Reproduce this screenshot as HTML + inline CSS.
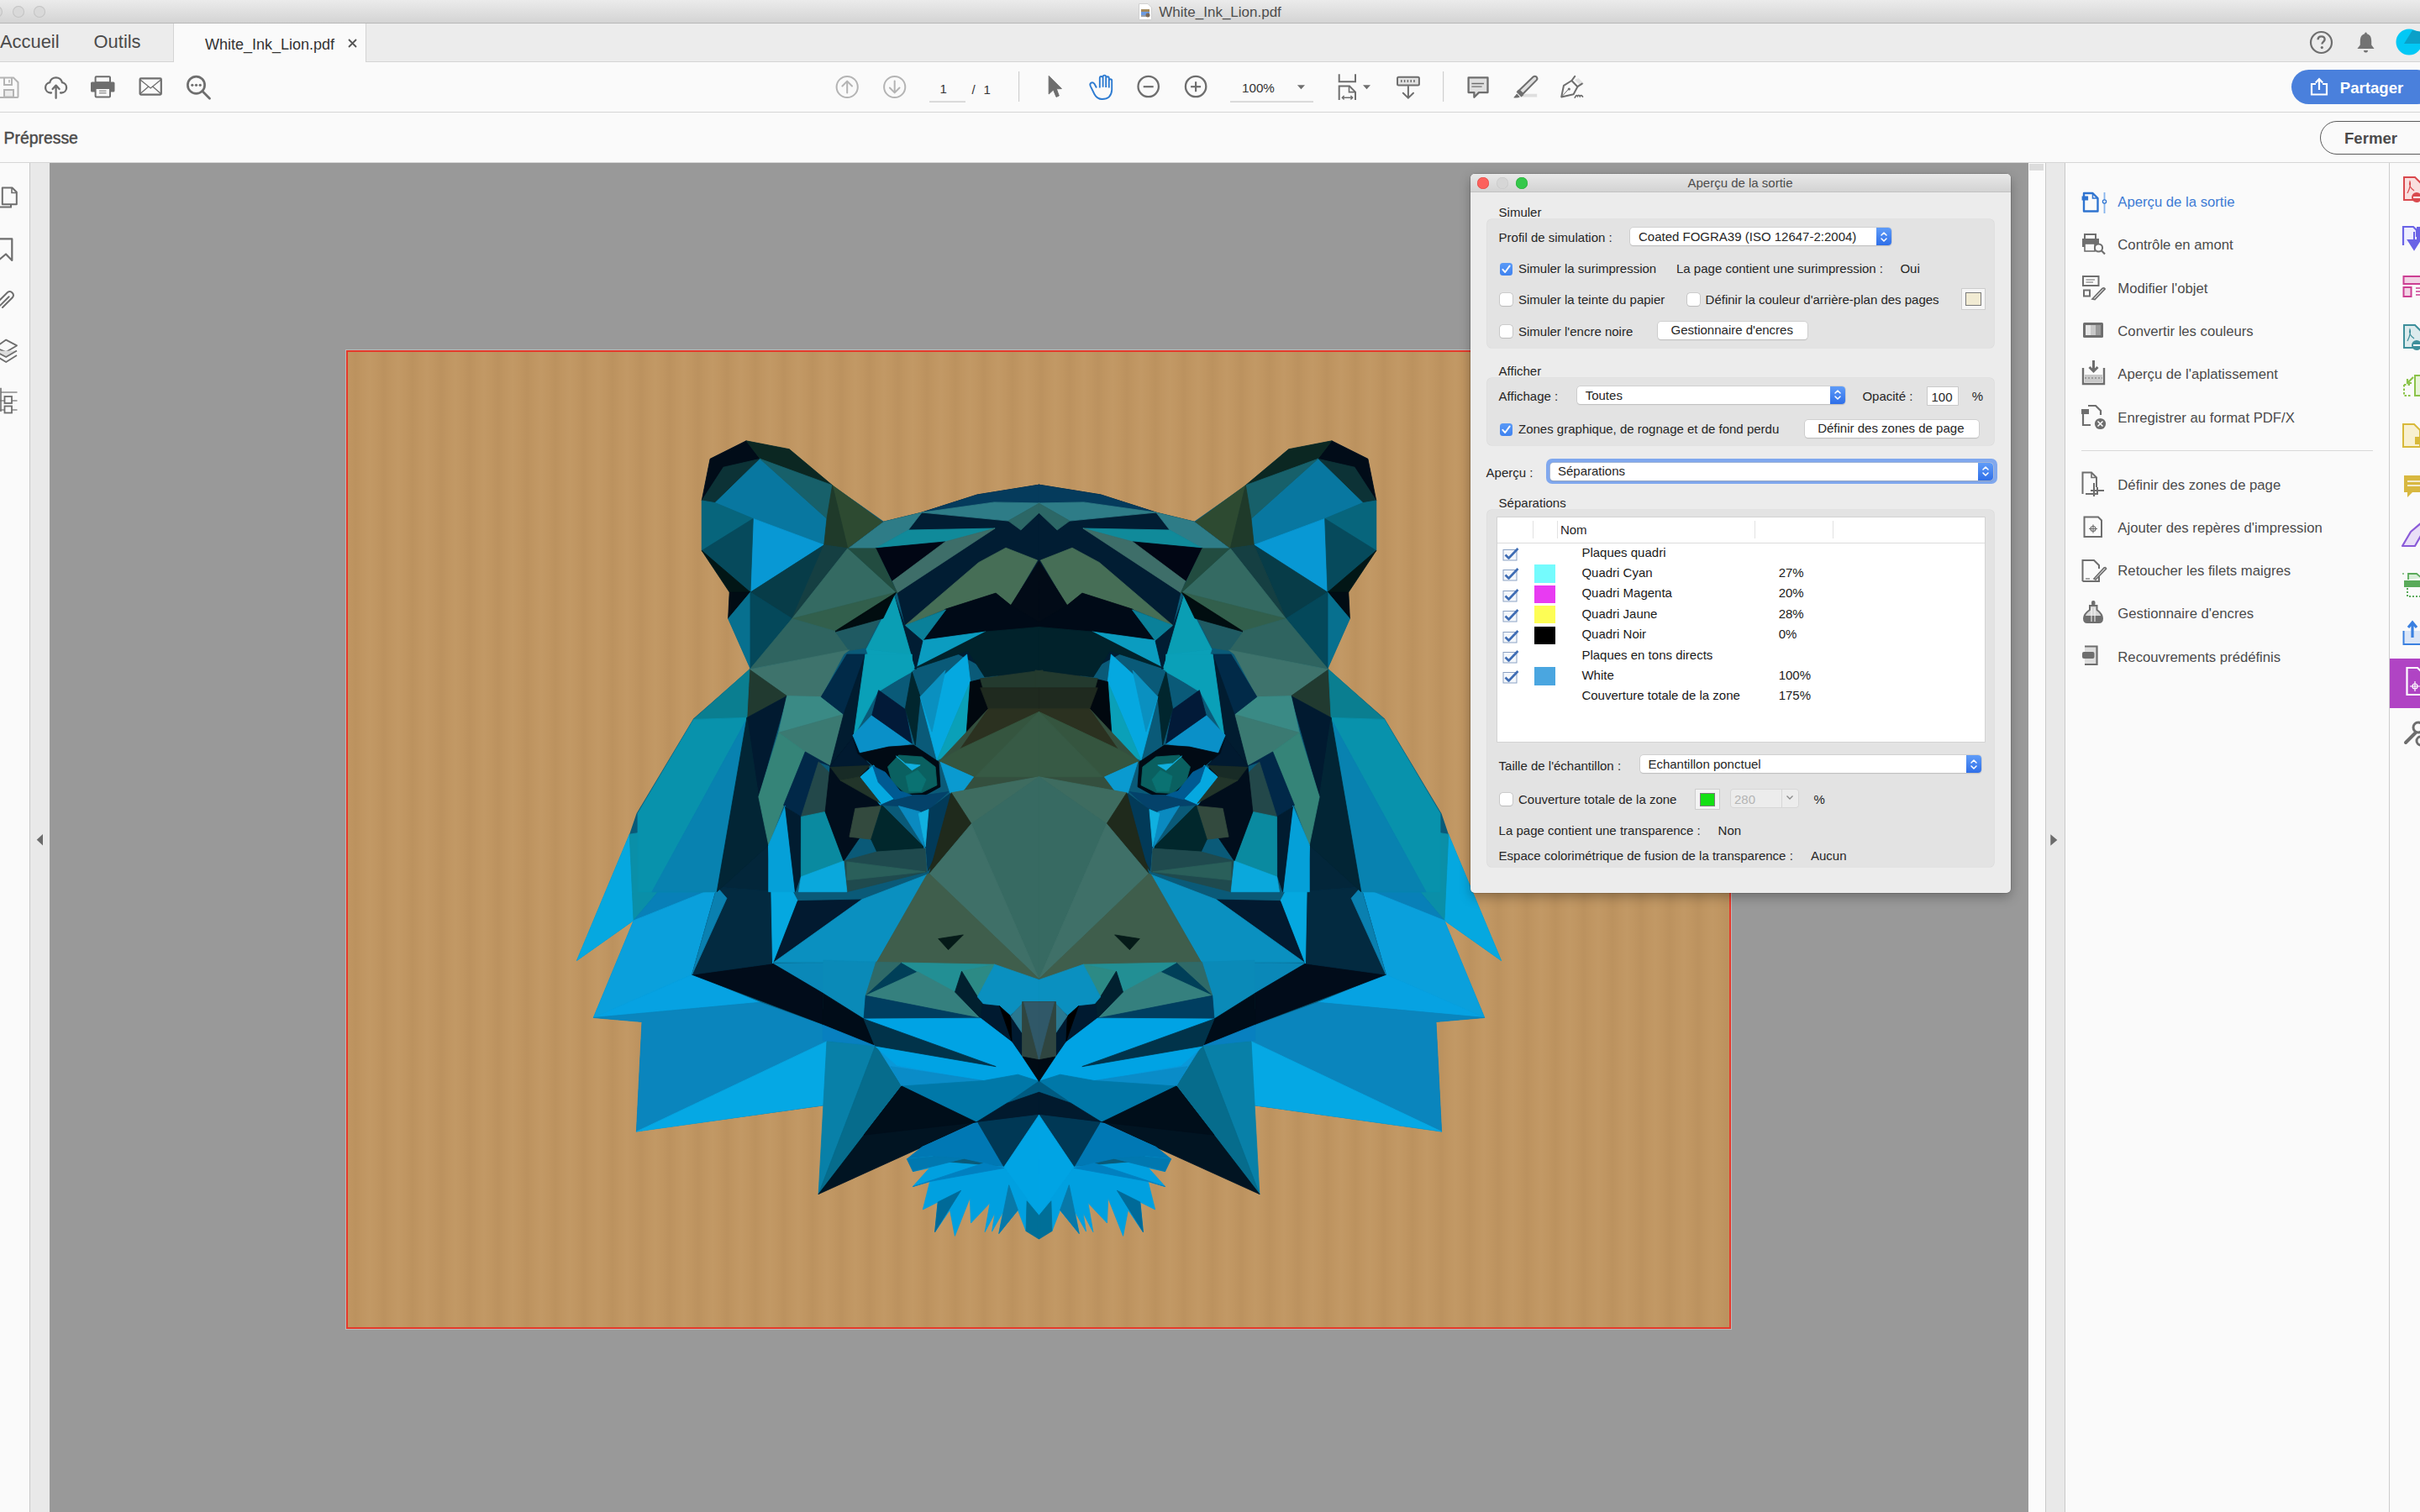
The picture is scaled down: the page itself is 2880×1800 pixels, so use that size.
<!DOCTYPE html>
<html><head><meta charset="utf-8"><style>
html,body{margin:0;padding:0;width:2880px;height:1800px;overflow:hidden;background:#fafafa;}
.r{position:absolute;}
.t{position:absolute;white-space:nowrap;line-height:1;font-family:"Liberation Sans",sans-serif;}
</style></head><body>
<div class="r" style="left:0px;top:0px;width:2880px;height:27px;background:linear-gradient(#ebebeb,#d4d4d4);"></div>
<div class="r" style="left:0px;top:27px;width:2880px;height:1px;background:#b8b8b8;"></div>
<div class="r" style="left:-11px;top:7px;width:14px;height:14px;border-radius:50%;background:#d9d9d9;box-shadow:inset 0 0 0 1px #c4c4c4;"></div>
<div class="r" style="left:14.7px;top:7px;width:14px;height:14px;border-radius:50%;background:#d9d9d9;box-shadow:inset 0 0 0 1px #c4c4c4;"></div>
<div class="r" style="left:40px;top:7px;width:14px;height:14px;border-radius:50%;background:#d9d9d9;box-shadow:inset 0 0 0 1px #c4c4c4;"></div>
<svg class="r" style="left:1355px;top:4px" width="16" height="20" viewBox="0 0 16 20">
<path d="M0.5 0.5 H11 L15.5 5 V19.5 H0.5 Z" fill="#fff" stroke="#d0d0d0"/>
<rect x="3" y="7" width="10" height="3" fill="#a58a5c"/><rect x="3" y="10" width="10" height="4" fill="#6d9be0"/><rect x="3" y="14" width="10" height="2" fill="#9aa0a8"/><circle cx="11" cy="14" r="2.5" fill="#7a6a5a"/>
</svg>
<div class="t" style="left:1379.30px;top:6.01px;font-size:17px;color:#4d4d4d;font-weight:normal;">White_Ink_Lion.pdf</div>
<div class="r" style="left:0px;top:28px;width:2880px;height:46px;background:#ececec;"></div>
<div class="r" style="left:0px;top:73px;width:2880px;height:1px;background:#d4d4d4;"></div>
<div class="r" style="left:206px;top:28px;width:230px;height:46px;background:#fafafa;border-left:1px solid #d4d4d4;border-right:1px solid #d4d4d4;box-sizing:border-box;"></div>
<div class="t" style="left:0.00px;top:39.46px;font-size:21.9px;color:#4b4b4b;font-weight:normal;">Accueil</div>
<div class="t" style="left:111.60px;top:39.46px;font-size:21.9px;color:#4b4b4b;font-weight:normal;">Outils</div>
<div class="t" style="left:244.00px;top:44.16px;font-size:18px;color:#333;font-weight:normal;">White_Ink_Lion.pdf</div>
<svg class="r" style="left:414px;top:46px" width="11" height="11" viewBox="0 0 11 11"><path d="M1 1 L10 10 M10 1 L1 10" stroke="#555" stroke-width="1.8"/></svg>
<svg class="r" style="left:2748px;top:36px" width="29" height="29" viewBox="0 0 29 29"><circle cx="14.5" cy="14.5" r="12.5" fill="none" stroke="#6e6e6e" stroke-width="2.2"/>
<path d="M10.6 11.2 C10.6 8.6 12.4 7.4 14.6 7.4 C17 7.4 18.6 8.8 18.6 11 C18.6 13.6 15.4 13.8 15.4 16.6" fill="none" stroke="#6e6e6e" stroke-width="2.4"/><circle cx="15.3" cy="20.6" r="1.6" fill="#6e6e6e"/></svg>
<svg class="r" style="left:2804px;top:37px" width="23" height="27" viewBox="0 0 23 27"><path d="M11.5 1.5 C12.6 1.5 12.8 2.5 12.8 3.2 C16.8 4.2 18.2 7.4 18.2 12 L18.2 16.5 L21.6 21 L1.4 21 L4.8 16.5 L4.8 12 C4.8 7.4 6.2 4.2 10.2 3.2 C10.2 2.5 10.4 1.5 11.5 1.5 Z" fill="#737373"/><path d="M9 23 H14 C14 25 12.8 25.6 11.5 25.6 C10.2 25.6 9 25 9 23Z" fill="#737373"/></svg>
<svg class="r" style="left:2851px;top:34px" width="32" height="32" viewBox="0 0 32 32"><circle cx="16" cy="16" r="15.5" fill="#02c8f5"/><path d="M10 18 L20 2 L32 4 L32 18 Z" fill="#0aa0c8"/></svg>
<div class="r" style="left:0px;top:74px;width:2880px;height:59px;background:#fafafa;"></div>
<div class="r" style="left:0px;top:133px;width:2880px;height:1px;background:#d6d6d6;"></div>
<div class="r" style="left:0px;top:134px;width:2880px;height:59px;background:#fafafa;"></div>
<div class="r" style="left:0px;top:193px;width:2880px;height:1px;background:#d6d6d6;"></div>
<div class="t" style="left:4.50px;top:155.28px;font-size:19.4px;color:#4b4b4b;font-weight:normal;-webkit-text-stroke:0.45px #4b4b4b;">Prépresse</div>
<div class="r" style="left:2727px;top:83px;width:170px;height:41px;border-radius:20.5px;background:#4a80dc;"></div>
<svg class="r" style="left:2749px;top:92px" width="22" height="22" viewBox="0 0 22 22"><path d="M7 8 H2 V20.5 H20 V8 H15" fill="none" stroke="#fff" stroke-width="2.2"/><path d="M11 15 V2.5 M6.8 6.5 L11 2 L15.2 6.5" fill="none" stroke="#fff" stroke-width="2.2"/></svg>
<div class="t" style="left:2784.80px;top:96.26px;font-size:18.6px;color:#fff;font-weight:bold;">Partager</div>
<div class="r" style="left:2761px;top:144px;width:140px;height:40px;border-radius:20px;border:1.6px solid #5a5a5a;box-sizing:border-box;"></div>
<div class="t" style="left:2790.00px;top:155.76px;font-size:18.6px;color:#4b4b4b;font-weight:bold;">Fermer</div>
<svg class="r" style="left:0;top:0" width="2880" height="194" viewBox="0 0 2880 194">
<path d="M-2 92.5 H16 L21.5 98 V115 Q21.5 116 20.5 116 H-2 Z" fill="none" stroke="#b4b4b4" stroke-width="2"/><path d="M5 92.5 V101 H14 V92.5" fill="none" stroke="#b4b4b4" stroke-width="2"/><rect x="5" y="107" width="11" height="8.5" fill="#ececec" stroke="#b4b4b4" stroke-width="2"/><rect x="10.2" y="95" width="1.6" height="3.5" fill="#b4b4b4"/>
<path d="M61 110.5 H60 A6.2 6.2 0 0 1 59.2 98.2 A7.6 7.6 0 0 1 74 98.2 A6.2 6.2 0 0 1 73.2 110.5 H72" fill="none" stroke="#6e6e6e" stroke-width="2.3" stroke-linecap="round"/><path d="M66.6 116.8 V102 M62.6 106 L66.6 101.6 L70.6 106" fill="none" stroke="#6e6e6e" stroke-width="2.3" stroke-linecap="round" stroke-linejoin="round"/>
<rect x="113.6" y="91.2" width="17.4" height="7" rx="1" fill="none" stroke="#6e6e6e" stroke-width="2"/><rect x="108" y="97.5" width="28.5" height="12" rx="1.5" fill="#6e6e6e"/><rect x="113.6" y="105" width="17.4" height="10.6" rx="1" fill="#fafafa" stroke="#6e6e6e" stroke-width="2"/><path d="M118 108.2 H126.5 M118 110.8 H126.5" stroke="#6e6e6e" stroke-width="1"/>
<rect x="166.6" y="93.4" width="25.2" height="19.2" rx="1" fill="none" stroke="#6e6e6e" stroke-width="2.2"/><path d="M167 95 L179.2 105 L191.4 95 M167 111.5 L176.5 103.2 M191.4 111.5 L182 103.2" fill="none" stroke="#6e6e6e" stroke-width="1.3"/>
<circle cx="233.5" cy="101.2" r="10.1" fill="none" stroke="#6e6e6e" stroke-width="2.7"/><path d="M240.8 108.6 L249.5 117.3" stroke="#6e6e6e" stroke-width="2.8" stroke-linecap="round"/><circle cx="228.8" cy="101.3" r="1.6" fill="#6e6e6e"/><circle cx="233.5" cy="101.3" r="1.6" fill="#6e6e6e"/><circle cx="238.2" cy="101.3" r="1.6" fill="#6e6e6e"/>
<circle cx="1008.2" cy="103.5" r="12.6" fill="none" stroke="#b4b4b4" stroke-width="2"/><path d="M1008.2 110.6 V97 M1002.4000000000001 102.5 L1008.2 96.6 L1014.0 102.5" fill="none" stroke="#b4b4b4" stroke-width="2" stroke-linecap="round" stroke-linejoin="round"/><circle cx="1064.7" cy="103.5" r="12.6" fill="none" stroke="#b4b4b4" stroke-width="2"/><path d="M1064.7 96.6 V110 M1058.9 104.5 L1064.7 110.4 L1070.5 104.5" fill="none" stroke="#b4b4b4" stroke-width="2" stroke-linecap="round" stroke-linejoin="round"/>
<rect x="1106" y="120.3" width="43" height="1.6" fill="#d2d2d2"/><rect x="1212" y="85" width="1.2" height="36" fill="#cfcfcf"/><rect x="1717" y="85" width="1.2" height="36" fill="#cfcfcf"/><rect x="1464" y="120.3" width="99" height="1.6" fill="#d2d2d2"/>
<path d="M1248.2 90.4 L1248.2 112 L1253.6 107 L1257 115.4 L1260.3 114 L1257.3 105.8 L1263.4 105.6 Z" fill="#6e6e6e" stroke="#6e6e6e" stroke-width="1" stroke-linejoin="round"/>
<path d="M1305 104.5 L1302.4 99.8 Q1300.5 97.2 1298 99 Q1296.7 100.2 1297.8 102.6 L1302.4 112 Q1305.5 118 1311.5 118 Q1322.5 118 1323.2 107 L1323.2 96 Q1323.2 94.2 1321.5 94.2 Q1319.8 94.2 1319.8 96 L1319.8 104.5 M1319.8 104.5 V93.2 Q1319.8 91.2 1318 91.2 Q1316.2 91.2 1316.2 93.2 V104 M1316.2 104 V91.6 Q1316.2 89.6 1314.4 89.6 Q1312.6 89.6 1312.6 91.6 V103.8 M1312.6 103.8 V93 Q1312.6 91 1310.6 91 Q1308.8 91 1308.8 93 V104.5" fill="none" stroke="#2d7bd1" stroke-width="1.9" stroke-linejoin="round"/>
<circle cx="1366.7" cy="103" r="12.2" fill="none" stroke="#6e6e6e" stroke-width="2.3"/><path d="M1360.7 103.2 H1372.7" stroke="#6e6e6e" stroke-width="2.2"/><circle cx="1423.1" cy="103" r="12.2" fill="none" stroke="#6e6e6e" stroke-width="2.3"/><path d="M1417.1 103.2 H1429.1" stroke="#6e6e6e" stroke-width="2.2"/><path d="M1423.1 97.2 V109.2" stroke="#6e6e6e" stroke-width="2.2"/>
<path d="M1543.9 101.2 H1553 L1548.45 106.3 Z" fill="#6e6e6e"/><path d="M1622 101.2 H1631 L1626.5 106.3 Z" fill="#6e6e6e"/>
<path d="M1593.7 88.3 V97.2 H1613 V88.3" fill="none" stroke="#6e6e6e" stroke-width="2"/><path d="M1593.7 119 V102.6 H1606 L1613 109.6 V119" fill="none" stroke="#6e6e6e" stroke-width="2"/><path d="M1605.5 102.6 V109.6 H1613" fill="none" stroke="#6e6e6e" stroke-width="1.6"/><path d="M1597.5 116.2 H1609.5 M1599.6 114 L1597.3 116.2 L1599.6 118.4 M1607.4 114 L1609.7 116.2 L1607.4 118.4" fill="none" stroke="#6e6e6e" stroke-width="1.4"/>
<rect x="1663" y="91.8" width="25.9" height="9.6" rx="1.5" fill="#e2e2e2" stroke="#6e6e6e" stroke-width="2"/><path d="M1667.8 95 V98 M1671.6 95 V98 M1675.4 95 V98 M1679.2 95 V98 M1683 95 V98" stroke="#6e6e6e" stroke-width="1.5"/><path d="M1675.9 103 V116.5 M1669.8 110.8 L1675.9 116.6 L1682 110.8" fill="none" stroke="#6e6e6e" stroke-width="2" stroke-linecap="round"/>
<path d="M1747.6 92.4 H1770.5 V110.1 H1760 L1754.4 115.8 V110.1 H1747.6 Z" fill="#e0e0e0" stroke="#6e6e6e" stroke-width="2.3" stroke-linejoin="round"/><path d="M1751.4 99.5 H1766 M1751.4 103.1 H1763.6" stroke="#6e6e6e" stroke-width="1.3"/>
<path d="M1809 115.5 H1829.2 V111.8 H1812.5 Z" fill="#dedede"/><path d="M1808 107.5 L1824.6 91.5 Q1826.6 89.8 1828.6 91.6 Q1830.3 93.6 1828.6 95.4 L1812.4 111.8 Z" fill="#dedede" stroke="#6e6e6e" stroke-width="2" stroke-linejoin="round"/><path d="M1806.8 106.8 L1813.4 113 L1810.4 115.4 L1804.6 109.4 Z" fill="#6e6e6e"/><path d="M1801.2 116.2 L1805.2 111.6 L1808.8 115.4 Q1806 116.8 1801.2 116.2Z" fill="#6e6e6e"/>
<path d="M1874 95 L1881 102 L1885 99.6 L1878.6 93 Z" fill="#e2e2e2"/><path d="M1858.2 115.4 L1861 101.8 L1870.4 96 L1877.4 103.2 L1872.6 112.3 Z" fill="none" stroke="#6e6e6e" stroke-width="2" stroke-linejoin="round"/><path d="M1870.4 96 L1874.2 90.8 M1877.4 103.2 L1882.8 99.6" stroke="#6e6e6e" stroke-width="2" stroke-linecap="round"/><path d="M1858.6 115 L1866.8 106" stroke="#6e6e6e" stroke-width="1"/><circle cx="1867.3" cy="106" r="1.6" fill="#6e6e6e"/><path d="M1874.2 116.2 Q1876 112 1877.4 114.6 Q1878.8 112 1880.2 114.8 Q1881.6 112.2 1883.6 115.2" fill="none" stroke="#6e6e6e" stroke-width="1.6" stroke-linecap="round"/>
</svg>
<div class="t" style="left:1118.50px;top:97.50px;font-size:15px;color:#333;font-weight:normal;">1</div>
<div class="t" style="left:1156.50px;top:98.60px;font-size:15px;color:#333;font-weight:normal;">/</div>
<div class="t" style="left:1170.50px;top:98.60px;font-size:15px;color:#333;font-weight:normal;">1</div>
<div class="t" style="left:1478.00px;top:97.33px;font-size:15.2px;color:#333;font-weight:normal;">100%</div>
<div class="r" style="left:0px;top:194px;width:35px;height:1606px;background:#fafafa;"></div>
<div class="r" style="left:35px;top:194px;width:1px;height:1606px;background:#c9c9c9;"></div>
<div class="r" style="left:36px;top:194px;width:23px;height:1606px;background:#e9e9e9;"></div>
<div class="r" style="left:58.5px;top:194px;width:1px;height:1606px;background:#d4d4d4;"></div>
<div class="r" style="left:59px;top:194px;width:2355px;height:1606px;background:#999999;"></div>
<div class="r" style="left:2414px;top:194px;width:19.5px;height:1606px;background:#fbfbfb;"></div>
<div class="r" style="left:2415px;top:195px;width:17px;height:8px;background:#dcdcdc;"></div>
<div class="r" style="left:2433.5px;top:194px;width:1px;height:1606px;background:#c9c9c9;"></div>
<div class="r" style="left:2434.5px;top:194px;width:22px;height:1606px;background:#e9e9e9;"></div>
<div class="r" style="left:2456.5px;top:194px;width:1px;height:1606px;background:#c9c9c9;"></div>
<div class="r" style="left:2457.5px;top:194px;width:385.5px;height:1606px;background:#fafafa;"></div>
<div class="r" style="left:2843px;top:194px;width:1px;height:1606px;background:#cdcdcd;"></div>
<div class="r" style="left:2844px;top:194px;width:36px;height:1606px;background:#fafafa;"></div>
<svg class="r" style="left:0;top:980px" width="2880" height="40" viewBox="0 980 2880 40"><path d="M51 993 L43.7 999.8 L51 1006.6 Z" fill="#6b6b6b"/><path d="M2440.3 993.2 L2448.3 999.9 L2440.3 1006.7 Z" fill="#6b6b6b"/></svg>
<svg class="r" style="left:0;top:194px" width="35" height="320" viewBox="0 194 35 320">
<path d="M-4 234 V246.5 H13 V243" fill="none" stroke="#6e6e6e" stroke-width="2"/><path d="M2.8 223.5 H14.5 L19.8 228.8 V243.2 H2.8 Z" fill="#fafafa" stroke="#6e6e6e" stroke-width="2" stroke-linejoin="round"/><path d="M14 223.5 V229.5 H19.8" fill="none" stroke="#6e6e6e" stroke-width="1.6"/>
<path d="M-2 284.4 H14.3 V310 L7 302.5 L-2 310" fill="none" stroke="#6e6e6e" stroke-width="2.2" stroke-linejoin="round"/>
<path d="M3 366 L15 354 A4.3 4.3 0 0 0 9 348 L-3 360 A2.3 2.3 0 0 0 0.4 363.4 L10.6 353.2" fill="none" stroke="#6e6e6e" stroke-width="2" stroke-linecap="round"/>
<path d="M-6 414 L7.2 404.6 L20 411.4 L7.2 419 Z" fill="#fafafa" stroke="#6e6e6e" stroke-width="1.8" stroke-linejoin="round"/><path d="M-6 418 L7.2 425 L20 417.4" fill="#ddd" stroke="#6e6e6e" stroke-width="1.8" stroke-linejoin="round"/><path d="M-6 423 L7.2 431 L20 423" fill="none" stroke="#6e6e6e" stroke-width="1.8" stroke-linejoin="round"/>
<path d="M1 467 H20.5 M-4 477 H20.5 M-4 488 H20.5" stroke="#8a8a8a" stroke-width="1.4"/><path d="M1 461.8 V490" stroke="#6e6e6e" stroke-width="1.6"/><rect x="5.5" y="472" width="8.5" height="8" fill="#fafafa" stroke="#6e6e6e" stroke-width="1.8"/><rect x="5.5" y="483.5" width="8.5" height="8" fill="#fafafa" stroke="#6e6e6e" stroke-width="1.8"/>
</svg>
<div class="r" style="left:411px;top:416px;width:1650px;height:1167px;background:#b9b9b9;"></div>
<div class="r" style="left:412px;top:417px;width:1648px;height:1165px;background:#e5392b;"></div>
<div class="r" style="left:414px;top:419px;width:1644px;height:1161px;background-color:#c09662;background-image:repeating-linear-gradient(90deg, rgba(90,55,20,0) 0px, rgba(90,55,20,0.045) 9px, rgba(90,55,20,0) 18px, rgba(255,235,200,0.03) 26px, rgba(90,55,20,0) 34px);"></div>
<svg class="r" style="left:0;top:0" width="2880" height="1800" viewBox="0 0 2880 1800">
<defs><clipPath id="pg"><rect x="414" y="419" width="1644" height="1161"/></clipPath></defs><g clip-path="url(#pg)" shape-rendering="geometricPrecision">
<polygon points="1237.0,577.0 1163.0,589.0 1097.0,610.0 1052.0,621.0 990.6,577.7 939.3,534.7 888.0,524.8 845.0,546.3 835.2,596.0 835.2,655.5 868.2,705.0 866.6,736.5 893.0,796.0 825.2,855.6 757.5,968.4 749.2,993.0 686.3,1143.7 754.1,1095.8 706.2,1211.5 764.0,1216.5 757.4,1347.2 984.0,1315.7 974.0,1421.6 1098.0,1365.3 1110.2,1376.8 1106.1,1390.5 1106.7,1406.5 1116.2,1431.0 1130.5,1440.5 1154.3,1426.2 1178.1,1432.1 1184.0,1444.0 1193.6,1442.9 1211.4,1440.5 1222.1,1429.8 1236.4,1475.0 1236.6,1475.0 1250.9,1429.8 1261.6,1440.5 1279.4,1442.9 1289.0,1444.0 1294.9,1432.1 1318.7,1426.2 1342.5,1440.5 1356.8,1431.0 1366.3,1406.5 1366.9,1390.5 1362.8,1376.8 1375.0,1365.3 1499.0,1421.6 1489.0,1315.7 1715.6,1347.2 1709.0,1216.5 1766.8,1211.5 1718.9,1095.8 1786.7,1143.7 1723.8,993.0 1715.5,968.4 1647.8,855.6 1580.0,796.0 1606.4,736.5 1604.8,705.0 1637.8,655.5 1637.8,596.0 1628.0,546.3 1585.0,524.8 1533.7,534.7 1482.4,577.7 1421.0,621.0 1376.0,610.0 1310.0,589.0 1236.0,577.0" fill="#0a5a78"/>
<polygon points="845.1,546.3 888.1,524.8 904.6,546.3 861.0,556.2 835.2,595.9" fill="#010c18" stroke="#010c18" stroke-width="0.8"/>
<polygon points="1627.9,546.3 1584.9,524.8 1568.4,546.3 1612.0,556.2 1637.8,595.9" fill="#010c18" stroke="#010c18" stroke-width="0.8"/>
<polygon points="888.1,524.8 939.3,534.7 990.6,577.7 904.6,546.3" fill="#0b2722" stroke="#0b2722" stroke-width="0.8"/>
<polygon points="1584.9,524.8 1533.7,534.7 1482.4,577.7 1568.4,546.3" fill="#0b2722" stroke="#0b2722" stroke-width="0.8"/>
<polygon points="861.0,556.2 904.6,546.3 851.0,598.6 835.2,595.9" fill="#0c3236" stroke="#0c3236" stroke-width="0.8"/>
<polygon points="1612.0,556.2 1568.4,546.3 1622.0,598.6 1637.8,595.9" fill="#0c3236" stroke="#0c3236" stroke-width="0.8"/>
<polygon points="851.0,598.6 904.6,546.3 984.0,617.4 980.7,648.8 896.3,617.4" fill="#0877a0" stroke="#0877a0" stroke-width="0.8"/>
<polygon points="1622.0,598.6 1568.4,546.3 1489.0,617.4 1492.3,648.8 1576.7,617.4" fill="#0877a0" stroke="#0877a0" stroke-width="0.8"/>
<polygon points="904.6,546.3 990.6,577.7 984.0,617.4" fill="#17606a" stroke="#17606a" stroke-width="0.8"/>
<polygon points="1568.4,546.3 1482.4,577.7 1489.0,617.4" fill="#17606a" stroke="#17606a" stroke-width="0.8"/>
<polygon points="835.2,595.9 851.0,598.6 896.3,617.4 835.2,655.5" fill="#07657c" stroke="#07657c" stroke-width="0.8"/>
<polygon points="1637.8,595.9 1622.0,598.6 1576.7,617.4 1637.8,655.5" fill="#07657c" stroke="#07657c" stroke-width="0.8"/>
<polygon points="896.3,617.4 980.7,648.8 893.0,705.1" fill="#0898d4" stroke="#0898d4" stroke-width="0.8"/>
<polygon points="1576.7,617.4 1492.3,648.8 1580.0,705.1" fill="#0898d4" stroke="#0898d4" stroke-width="0.8"/>
<polygon points="835.2,655.5 896.3,617.4 893.0,705.1" fill="#064a5c" stroke="#064a5c" stroke-width="0.8"/>
<polygon points="1637.8,655.5 1576.7,617.4 1580.0,705.1" fill="#064a5c" stroke="#064a5c" stroke-width="0.8"/>
<polygon points="835.2,655.5 893.0,705.1 868.2,705.1" fill="#021616" stroke="#021616" stroke-width="0.8"/>
<polygon points="1637.8,655.5 1580.0,705.1 1604.8,705.1" fill="#021616" stroke="#021616" stroke-width="0.8"/>
<polygon points="990.6,577.7 1051.8,622.4 1008.8,652.8" fill="#2d4a31" stroke="#2d4a31" stroke-width="0.8"/>
<polygon points="1482.4,577.7 1421.2,622.4 1464.2,652.8" fill="#2d4a31" stroke="#2d4a31" stroke-width="0.8"/>
<polygon points="990.6,577.7 1008.8,652.8 980.7,648.8 984.0,617.4" fill="#1f3a2a" stroke="#1f3a2a" stroke-width="0.8"/>
<polygon points="1482.4,577.7 1464.2,652.8 1492.3,648.8 1489.0,617.4" fill="#1f3a2a" stroke="#1f3a2a" stroke-width="0.8"/>
<polygon points="893.0,705.1 980.7,648.8 942.6,736.5" fill="#073c48" stroke="#073c48" stroke-width="0.8"/>
<polygon points="1580.0,705.1 1492.3,648.8 1530.4,736.5" fill="#073c48" stroke="#073c48" stroke-width="0.8"/>
<polygon points="980.7,648.8 1008.8,652.8 942.6,736.5" fill="#153f42" stroke="#153f42" stroke-width="0.8"/>
<polygon points="1492.3,648.8 1464.2,652.8 1530.4,736.5" fill="#153f42" stroke="#153f42" stroke-width="0.8"/>
<polygon points="868.2,705.1 893.0,705.1 866.6,736.5" fill="#010c14" stroke="#010c14" stroke-width="0.8"/>
<polygon points="1604.8,705.1 1580.0,705.1 1606.4,736.5" fill="#010c14" stroke="#010c14" stroke-width="0.8"/>
<polygon points="866.6,736.5 893.0,705.1 893.0,796.0" fill="#07708f" stroke="#07708f" stroke-width="0.8"/>
<polygon points="1606.4,736.5 1580.0,705.1 1580.0,796.0" fill="#07708f" stroke="#07708f" stroke-width="0.8"/>
<polygon points="893.0,705.1 942.6,736.5 893.0,796.0" fill="#04485a" stroke="#04485a" stroke-width="0.8"/>
<polygon points="1580.0,705.1 1530.4,736.5 1580.0,796.0" fill="#04485a" stroke="#04485a" stroke-width="0.8"/>
<polygon points="1008.8,652.8 1066.7,705.1 942.6,736.5" fill="#346a62" stroke="#346a62" stroke-width="0.8"/>
<polygon points="1464.2,652.8 1406.3,705.1 1530.4,736.5" fill="#346a62" stroke="#346a62" stroke-width="0.8"/>
<polygon points="942.6,736.5 1066.7,705.1 993.9,751.4" fill="#325f4c" stroke="#325f4c" stroke-width="0.8"/>
<polygon points="1530.4,736.5 1406.3,705.1 1479.1,751.4" fill="#325f4c" stroke="#325f4c" stroke-width="0.8"/>
<polygon points="993.9,751.4 1066.7,705.1 1048.5,734.8" fill="#020d0d" stroke="#020d0d" stroke-width="0.8"/>
<polygon points="1479.1,751.4 1406.3,705.1 1424.5,734.8" fill="#020d0d" stroke="#020d0d" stroke-width="0.8"/>
<polygon points="942.6,736.5 993.9,751.4 1010.5,774.5 893.0,796.0" fill="#2f6460" stroke="#2f6460" stroke-width="0.8"/>
<polygon points="1530.4,736.5 1479.1,751.4 1462.5,774.5 1580.0,796.0" fill="#2f6460" stroke="#2f6460" stroke-width="0.8"/>
<polygon points="993.9,751.4 1048.5,734.8 1030.3,771.2 1010.5,774.5" fill="#1f5a62" stroke="#1f5a62" stroke-width="0.8"/>
<polygon points="1479.1,751.4 1424.5,734.8 1442.7,771.2 1462.5,774.5" fill="#1f5a62" stroke="#1f5a62" stroke-width="0.8"/>
<polygon points="1051.8,621.1 1097.1,610.1 1162.9,589.0 1237.0,577.1 1237.0,830.8 1077.3,744.4 1068.0,705.4 1061.7,691.8 1041.9,652.8 1009.8,652.8" fill="#011d33" stroke="#011d33" stroke-width="0.8"/>
<polygon points="1421.2,621.1 1375.9,610.1 1310.1,589.0 1236.0,577.1 1236.0,830.8 1395.7,744.4 1405.0,705.4 1411.3,691.8 1431.1,652.8 1463.2,652.8" fill="#011d33" stroke="#011d33" stroke-width="0.8"/>
<polygon points="1097.1,610.1 1162.9,589.0 1237.0,577.1 1237.0,598.9 1183.1,597.9" fill="#053b5c" stroke="#053b5c" stroke-width="0.8"/>
<polygon points="1375.9,610.1 1310.1,589.0 1236.0,577.1 1236.0,598.9 1289.9,597.9" fill="#053b5c" stroke="#053b5c" stroke-width="0.8"/>
<polygon points="1051.8,621.1 1097.1,610.1 1080.9,631.0 1041.9,652.8 1009.8,652.8" fill="#2e7c87" stroke="#2e7c87" stroke-width="0.8"/>
<polygon points="1421.2,621.1 1375.9,610.1 1392.1,631.0 1431.1,652.8 1463.2,652.8" fill="#2e7c87" stroke="#2e7c87" stroke-width="0.8"/>
<polygon points="1097.1,610.1 1183.1,597.9 1237.0,598.9 1200.0,620.1" fill="#2e7c87" stroke="#2e7c87" stroke-width="0.8"/>
<polygon points="1375.9,610.1 1289.9,597.9 1236.0,598.9 1273.0,620.1" fill="#2e7c87" stroke="#2e7c87" stroke-width="0.8"/>
<polygon points="1200.0,620.1 1237.0,598.9 1237.0,610.1 1214.9,631.0" fill="#2c6766" stroke="#2c6766" stroke-width="0.8"/>
<polygon points="1273.0,620.1 1236.0,598.9 1236.0,610.1 1258.1,631.0" fill="#2c6766" stroke="#2c6766" stroke-width="0.8"/>
<polygon points="1041.9,652.8 1080.9,631.0 1184.1,629.0 1124.9,644.9" fill="#108a9a" stroke="#108a9a" stroke-width="0.8"/>
<polygon points="1431.1,652.8 1392.1,631.0 1288.9,629.0 1348.1,644.9" fill="#108a9a" stroke="#108a9a" stroke-width="0.8"/>
<polygon points="1041.9,652.8 1124.9,644.9 1062.1,691.8" fill="#010614" stroke="#010614" stroke-width="0.8"/>
<polygon points="1431.1,652.8 1348.1,644.9 1410.9,691.8" fill="#010614" stroke="#010614" stroke-width="0.8"/>
<polygon points="1124.9,644.9 1184.1,629.0 1068.0,705.4 1062.1,691.8" fill="#3e6e69" stroke="#3e6e69" stroke-width="0.8"/>
<polygon points="1348.1,644.9 1288.9,629.0 1405.0,705.4 1410.9,691.8" fill="#3e6e69" stroke="#3e6e69" stroke-width="0.8"/>
<polygon points="1077.3,744.4 1164.6,669.7 1197.0,652.2 1234.7,667.0 1203.0,720.6 1185.1,706.1 1124.9,725.3" fill="#466e56" stroke="#466e56" stroke-width="0.8"/>
<polygon points="1395.7,744.4 1308.4,669.7 1276.0,652.2 1238.3,667.0 1270.0,720.6 1287.9,706.1 1348.1,725.3" fill="#466e56" stroke="#466e56" stroke-width="0.8"/>
<polygon points="1236.4,668.4 1203.0,720.6 1237.0,741.1" fill="#020b17" stroke="#020b17" stroke-width="0.8"/>
<polygon points="1236.6,668.4 1270.0,720.6 1236.0,741.1" fill="#020b17" stroke="#020b17" stroke-width="0.8"/>
<polygon points="1124.9,725.3 1185.1,706.1 1203.0,720.6 1237.0,741.1 1237.0,746.4 1173.2,752.0 1098.4,762.3" fill="#000a17" stroke="#000a17" stroke-width="0.8"/>
<polygon points="1348.1,725.3 1287.9,706.1 1270.0,720.6 1236.0,741.1 1236.0,746.4 1299.8,752.0 1374.6,762.3" fill="#000a17" stroke="#000a17" stroke-width="0.8"/>
<polygon points="1075.9,745.1 1125.6,725.9 1098.4,762.3 1084.5,781.1" fill="#0a8099" stroke="#0a8099" stroke-width="0.8"/>
<polygon points="1397.1,745.1 1347.4,725.9 1374.6,762.3 1388.5,781.1" fill="#0a8099" stroke="#0a8099" stroke-width="0.8"/>
<polygon points="1084.5,782.5 1098.4,762.3 1173.2,752.0 1085.9,796.0" fill="#0b9cc0" stroke="#0b9cc0" stroke-width="0.8"/>
<polygon points="1388.5,782.5 1374.6,762.3 1299.8,752.0 1387.1,796.0" fill="#0b9cc0" stroke="#0b9cc0" stroke-width="0.8"/>
<polygon points="1085.9,796.7 1173.2,752.0 1237.0,746.4 1237.0,798.0 1171.9,806.0 1152.0,774.9" fill="#01222b" stroke="#01222b" stroke-width="0.8"/>
<polygon points="1387.1,796.7 1299.8,752.0 1236.0,746.4 1236.0,798.0 1301.1,806.0 1321.0,774.9" fill="#01222b" stroke="#01222b" stroke-width="0.8"/>
<polygon points="1064.0,709.0 1077.0,745.0 1098.0,763.0 1090.0,797.0 1084.0,779.0" fill="#011d33" stroke="#011d33" stroke-width="0.8"/>
<polygon points="1409.0,709.0 1396.0,745.0 1375.0,763.0 1383.0,797.0 1389.0,779.0" fill="#011d33" stroke="#011d33" stroke-width="0.8"/>
<polygon points="1064.0,709.0 1084.0,779.0 1031.0,773.0" fill="#0a9eb4" stroke="#0a9eb4" stroke-width="0.8"/>
<polygon points="1409.0,709.0 1389.0,779.0 1442.0,773.0" fill="#0a9eb4" stroke="#0a9eb4" stroke-width="0.8"/>
<polygon points="994.0,752.0 1064.0,709.0 1051.0,736.0" fill="#010d10" stroke="#010d10" stroke-width="0.8"/>
<polygon points="1479.0,752.0 1409.0,709.0 1422.0,736.0" fill="#010d10" stroke="#010d10" stroke-width="0.8"/>
<polygon points="1031.0,773.0 1084.0,779.0 1088.0,797.0 1046.0,823.0" fill="#0aa0b8" stroke="#0aa0b8" stroke-width="0.8"/>
<polygon points="1442.0,773.0 1389.0,779.0 1385.0,797.0 1427.0,823.0" fill="#0aa0b8" stroke="#0aa0b8" stroke-width="0.8"/>
<polygon points="1009.5,652.9 1042.2,652.9 1068.0,706.4" fill="#224c40" stroke="#224c40" stroke-width="0.8"/>
<polygon points="1463.5,652.9 1430.8,652.9 1405.0,706.4" fill="#224c40" stroke="#224c40" stroke-width="0.8"/>
<polygon points="919.5,1147.0 1043.5,1145.4 1030.3,1185.1 1028.7,1211.5" fill="#0a88b8" stroke="#0a88b8" stroke-width="0.8"/>
<polygon points="1553.5,1147.0 1429.5,1145.4 1442.7,1185.1 1444.3,1211.5" fill="#0a88b8" stroke="#0a88b8" stroke-width="0.8"/>
<polygon points="749.2,993.2 754.1,1095.8 686.3,1143.7" fill="#05a8e0" stroke="#05a8e0" stroke-width="0.8"/>
<polygon points="1723.8,993.2 1718.9,1095.8 1786.7,1143.7" fill="#05a8e0" stroke="#05a8e0" stroke-width="0.8"/>
<polygon points="749.2,993.2 855.0,976.7 754.1,1095.8" fill="#0a8fa8" stroke="#0a8fa8" stroke-width="0.8"/>
<polygon points="1723.8,993.2 1618.0,976.7 1718.9,1095.8" fill="#0a8fa8" stroke="#0a8fa8" stroke-width="0.8"/>
<polygon points="855.0,976.7 853.3,1056.1 754.1,1095.8" fill="#0880b8" stroke="#0880b8" stroke-width="0.8"/>
<polygon points="1618.0,976.7 1619.7,1056.1 1718.9,1095.8" fill="#0880b8" stroke="#0880b8" stroke-width="0.8"/>
<polygon points="706.2,1211.5 754.1,1095.8 853.3,1056.1 823.6,1160.3" fill="#0aa0dc" stroke="#0aa0dc" stroke-width="0.8"/>
<polygon points="1766.8,1211.5 1718.9,1095.8 1619.7,1056.1 1649.4,1160.3" fill="#0aa0dc" stroke="#0aa0dc" stroke-width="0.8"/>
<polygon points="706.2,1211.5 823.6,1160.3 904.6,1193.3" fill="#06a2e2" stroke="#06a2e2" stroke-width="0.8"/>
<polygon points="1766.8,1211.5 1649.4,1160.3 1568.4,1193.3" fill="#06a2e2" stroke="#06a2e2" stroke-width="0.8"/>
<polygon points="706.2,1211.5 904.6,1193.3 1041.9,1243.0 984.0,1239.7 757.4,1347.1 764.0,1216.5" fill="#0a85bd" stroke="#0a85bd" stroke-width="0.8"/>
<polygon points="1766.8,1211.5 1568.4,1193.3 1431.1,1243.0 1489.0,1239.7 1715.6,1347.1 1709.0,1216.5" fill="#0a85bd" stroke="#0a85bd" stroke-width="0.8"/>
<polygon points="757.4,1347.1 984.0,1239.7 980.7,1315.7" fill="#05a8e4" stroke="#05a8e4" stroke-width="0.8"/>
<polygon points="1715.6,1347.1 1489.0,1239.7 1492.3,1315.7" fill="#05a8e4" stroke="#05a8e4" stroke-width="0.8"/>
<polygon points="823.6,1160.3 919.5,1147.0 1028.6,1211.5 1041.9,1243.0" fill="#010c1a" stroke="#010c1a" stroke-width="0.8"/>
<polygon points="1649.4,1160.3 1553.5,1147.0 1444.4,1211.5 1431.1,1243.0" fill="#010c1a" stroke="#010c1a" stroke-width="0.8"/>
<polygon points="984.0,1239.7 1041.9,1244.6 974.1,1421.6" fill="#0880a8" stroke="#0880a8" stroke-width="0.8"/>
<polygon points="1489.0,1239.7 1431.1,1244.6 1498.9,1421.6" fill="#0880a8" stroke="#0880a8" stroke-width="0.8"/>
<polygon points="1041.9,1244.6 1073.3,1292.6 974.1,1421.6" fill="#066c8c" stroke="#066c8c" stroke-width="0.8"/>
<polygon points="1431.1,1244.6 1399.7,1292.6 1498.9,1421.6" fill="#066c8c" stroke="#066c8c" stroke-width="0.8"/>
<polygon points="1041.9,1243.0 1185.8,1269.4 1225.5,1277.7 1162.6,1335.6 1073.3,1292.6" fill="#0a98d8" stroke="#0a98d8" stroke-width="0.8"/>
<polygon points="1431.1,1243.0 1287.2,1269.4 1247.5,1277.7 1310.4,1335.6 1399.7,1292.6" fill="#0a98d8" stroke="#0a98d8" stroke-width="0.8"/>
<polygon points="1028.6,1211.5 1185.8,1267.8 1041.9,1243.0" fill="#032f48" stroke="#032f48" stroke-width="0.8"/>
<polygon points="1444.4,1211.5 1287.2,1267.8 1431.1,1243.0" fill="#032f48" stroke="#032f48" stroke-width="0.8"/>
<polygon points="1073.3,1292.6 1162.6,1335.6 1098.1,1365.3 974.1,1421.6" fill="#011422" stroke="#011422" stroke-width="0.8"/>
<polygon points="1399.7,1292.6 1310.4,1335.6 1374.9,1365.3 1498.9,1421.6" fill="#011422" stroke="#011422" stroke-width="0.8"/>
<polygon points="1162.6,1335.6 1195.7,1388.5 1098.1,1365.3" fill="#0a80c0" stroke="#0a80c0" stroke-width="0.8"/>
<polygon points="1310.4,1335.6 1277.3,1388.5 1374.9,1365.3" fill="#0a80c0" stroke="#0a80c0" stroke-width="0.8"/>
<polygon points="1162.6,1335.6 1236.4,1307.5 1236.4,1330.6 1195.7,1388.5" fill="#043652" stroke="#043652" stroke-width="0.8"/>
<polygon points="1310.4,1335.6 1236.6,1307.5 1236.6,1330.6 1277.3,1388.5" fill="#043652" stroke="#043652" stroke-width="0.8"/>
<polygon points="1195.7,1388.5 1236.4,1330.6 1236.4,1472.8" fill="#06a8e4" stroke="#06a8e4" stroke-width="0.8"/>
<polygon points="1277.3,1388.5 1236.6,1330.6 1236.6,1472.8" fill="#06a8e4" stroke="#06a8e4" stroke-width="0.8"/>
<polygon points="855.0,976.7 914.5,976.7 916.2,1061.0 853.3,1056.1" fill="#03263a" stroke="#03263a" stroke-width="0.8"/>
<polygon points="1618.0,976.7 1558.5,976.7 1556.8,1061.0 1619.7,1056.1" fill="#03263a" stroke="#03263a" stroke-width="0.8"/>
<polygon points="853.3,1056.1 917.8,1061.0 919.5,1147.0 823.6,1160.3" fill="#032a40" stroke="#032a40" stroke-width="0.8"/>
<polygon points="1619.7,1056.1 1555.2,1061.0 1553.5,1147.0 1649.4,1160.3" fill="#032a40" stroke="#032a40" stroke-width="0.8"/>
<polygon points="853.3,1056.1 864.9,1069.3 823.6,1160.3" fill="#0a80b0" stroke="#0a80b0" stroke-width="0.8"/>
<polygon points="1619.7,1056.1 1608.1,1069.3 1649.4,1160.3" fill="#0a80b0" stroke="#0a80b0" stroke-width="0.8"/>
<polygon points="914.5,1006.5 949.3,1072.6 919.5,1147.0 917.8,1061.0" fill="#05a8e0" stroke="#05a8e0" stroke-width="0.8"/>
<polygon points="1558.5,1006.5 1523.7,1072.6 1553.5,1147.0 1555.2,1061.0" fill="#05a8e0" stroke="#05a8e0" stroke-width="0.8"/>
<polygon points="949.3,1072.6 1025.3,1071.0 921.1,1145.4" fill="#021a30" stroke="#021a30" stroke-width="0.8"/>
<polygon points="1523.7,1072.6 1447.7,1071.0 1551.9,1145.4" fill="#021a30" stroke="#021a30" stroke-width="0.8"/>
<polygon points="921.1,1145.4 1025.3,1071.0 1103.1,1041.2 1043.5,1145.4" fill="#0a90c0" stroke="#0a90c0" stroke-width="0.8"/>
<polygon points="1551.9,1145.4 1447.7,1071.0 1369.9,1041.2 1429.5,1145.4" fill="#0a90c0" stroke="#0a90c0" stroke-width="0.8"/>
<polygon points="1043.5,1145.4 1103.1,1041.2 1236.4,976.7 1236.4,1165.2 1182.5,1148.7" fill="#3e5e4c" stroke="#3e5e4c" stroke-width="0.8"/>
<polygon points="1429.5,1145.4 1369.9,1041.2 1236.6,976.7 1236.6,1165.2 1290.5,1148.7" fill="#3e5e4c" stroke="#3e5e4c" stroke-width="0.8"/>
<polygon points="1156.0,1046.2 1236.4,976.7 1236.4,1165.2" fill="#437a6e" stroke="#437a6e" stroke-width="0.8"/>
<polygon points="1317.0,1046.2 1236.6,976.7 1236.6,1165.2" fill="#437a6e" stroke="#437a6e" stroke-width="0.8"/>
<polygon points="1116.3,1115.6 1146.1,1112.3 1127.9,1130.5" fill="#021816" stroke="#021816" stroke-width="0.8"/>
<polygon points="1356.7,1115.6 1326.9,1112.3 1345.1,1130.5" fill="#021816" stroke="#021816" stroke-width="0.8"/>
<polygon points="1030.3,1185.1 1073.3,1147.0 1182.5,1148.7 1165.9,1211.5" fill="#318080" stroke="#318080" stroke-width="0.8"/>
<polygon points="1442.7,1185.1 1399.7,1147.0 1290.5,1148.7 1307.1,1211.5" fill="#318080" stroke="#318080" stroke-width="0.8"/>
<polygon points="1028.6,1211.5 1165.9,1211.5 1162.6,1195.0 1030.3,1185.1" fill="#043d5a" stroke="#043d5a" stroke-width="0.8"/>
<polygon points="1444.4,1211.5 1307.1,1211.5 1310.4,1195.0 1442.7,1185.1" fill="#043d5a" stroke="#043d5a" stroke-width="0.8"/>
<polygon points="1136.1,1158.6 1169.2,1208.2 1202.3,1218.2 1236.4,1284.3 1236.4,1261.1 1215.5,1251.2 1202.3,1195.0" fill="#021a2a" stroke="#021a2a" stroke-width="0.8"/>
<polygon points="1336.9,1158.6 1303.8,1208.2 1270.7,1218.2 1236.6,1284.3 1236.6,1261.1 1257.5,1251.2 1270.7,1195.0" fill="#021a2a" stroke="#021a2a" stroke-width="0.8"/>
<polygon points="1215.5,1191.7 1236.4,1191.7 1236.4,1261.1 1217.2,1251.2" fill="#35606a" stroke="#35606a" stroke-width="0.8"/>
<polygon points="1257.5,1191.7 1236.6,1191.7 1236.6,1261.1 1255.8,1251.2" fill="#35606a" stroke="#35606a" stroke-width="0.8"/>
<polygon points="891.9,796.9 1010.5,773.9 1004.0,779.0 977.2,829.6 936.5,828.6" fill="#3e736c" stroke="#3e736c" stroke-width="0.8"/>
<polygon points="1581.1,796.9 1462.5,773.9 1469.0,779.0 1495.8,829.6 1536.5,828.6" fill="#3e736c" stroke="#3e736c" stroke-width="0.8"/>
<polygon points="891.9,796.9 936.5,828.6 888.9,854.4" fill="#213a30" stroke="#213a30" stroke-width="0.8"/>
<polygon points="1581.1,796.9 1536.5,828.6 1584.1,854.4" fill="#213a30" stroke="#213a30" stroke-width="0.8"/>
<polygon points="825.5,856.4 891.9,796.9 888.9,854.4" fill="#0a7e90" stroke="#0a7e90" stroke-width="0.8"/>
<polygon points="1647.5,856.4 1581.1,796.9 1584.1,854.4" fill="#0a7e90" stroke="#0a7e90" stroke-width="0.8"/>
<polygon points="759.0,968.4 825.5,856.4 888.9,854.4 853.2,1061.7 759.0,1061.7" fill="#0892ac" stroke="#0892ac" stroke-width="0.8"/>
<polygon points="1714.0,968.4 1647.5,856.4 1584.1,854.4 1619.8,1061.7 1714.0,1061.7" fill="#0892ac" stroke="#0892ac" stroke-width="0.8"/>
<polygon points="775.9,1061.7 886.9,859.3 853.2,1061.7" fill="#0882b0" stroke="#0882b0" stroke-width="0.8"/>
<polygon points="1697.1,1061.7 1586.1,859.3 1619.8,1061.7" fill="#0882b0" stroke="#0882b0" stroke-width="0.8"/>
<polygon points="888.9,854.4 936.5,828.6 902.8,948.6" fill="#011a30" stroke="#011a30" stroke-width="0.8"/>
<polygon points="1584.1,854.4 1536.5,828.6 1570.2,948.6" fill="#011a30" stroke="#011a30" stroke-width="0.8"/>
<polygon points="888.9,854.4 902.8,948.6 914.7,1006.1 853.2,1061.7" fill="#022535" stroke="#022535" stroke-width="0.8"/>
<polygon points="1584.1,854.4 1570.2,948.6 1558.3,1006.1 1619.8,1061.7" fill="#022535" stroke="#022535" stroke-width="0.8"/>
<polygon points="936.5,828.6 977.2,829.6 1004.0,850.4 926.6,872.2" fill="#3a8a85" stroke="#3a8a85" stroke-width="0.8"/>
<polygon points="1536.5,828.6 1495.8,829.6 1469.0,850.4 1546.4,872.2" fill="#3a8a85" stroke="#3a8a85" stroke-width="0.8"/>
<polygon points="926.6,872.2 1004.0,850.4 988.1,911.9 958.3,895.0" fill="#3b7a72" stroke="#3b7a72" stroke-width="0.8"/>
<polygon points="1546.4,872.2 1469.0,850.4 1484.9,911.9 1514.7,895.0" fill="#3b7a72" stroke="#3b7a72" stroke-width="0.8"/>
<polygon points="977.2,829.6 1007.9,779.0 1029.8,779.0 1004.0,850.4" fill="#012a48" stroke="#012a48" stroke-width="0.8"/>
<polygon points="1495.8,829.6 1465.1,779.0 1443.2,779.0 1469.0,850.4" fill="#012a48" stroke="#012a48" stroke-width="0.8"/>
<polygon points="1004.0,850.4 1029.8,779.0 1015.9,877.2 988.1,911.9" fill="#011c30" stroke="#011c30" stroke-width="0.8"/>
<polygon points="1469.0,850.4 1443.2,779.0 1457.1,877.2 1484.9,911.9" fill="#011c30" stroke="#011c30" stroke-width="0.8"/>
<polygon points="902.8,948.6 926.6,872.2 958.3,895.0 932.6,958.5 914.7,1006.1" fill="#358478" stroke="#358478" stroke-width="0.8"/>
<polygon points="1570.2,948.6 1546.4,872.2 1514.7,895.0 1540.4,958.5 1558.3,1006.1" fill="#358478" stroke="#358478" stroke-width="0.8"/>
<polygon points="932.6,958.5 958.3,895.0 988.1,911.9 974.2,906.9 953.4,972.4" fill="#012848" stroke="#012848" stroke-width="0.8"/>
<polygon points="1540.4,958.5 1514.7,895.0 1484.9,911.9 1498.8,906.9 1519.6,972.4" fill="#012848" stroke="#012848" stroke-width="0.8"/>
<polygon points="953.4,972.4 974.2,906.9 998.0,930.7 982.1,966.4" fill="#23484a" stroke="#23484a" stroke-width="0.8"/>
<polygon points="1519.6,972.4 1498.8,906.9 1475.0,930.7 1490.9,966.4" fill="#23484a" stroke="#23484a" stroke-width="0.8"/>
<polygon points="914.7,1006.1 934.5,959.5 946.4,1061.7 914.7,1061.7" fill="#05a0d8" stroke="#05a0d8" stroke-width="0.8"/>
<polygon points="1558.3,1006.1 1538.5,959.5 1526.6,1061.7 1558.3,1061.7" fill="#05a0d8" stroke="#05a0d8" stroke-width="0.8"/>
<polygon points="934.5,960.5 953.4,972.4 952.4,1043.8 946.4,1061.7" fill="#011c30" stroke="#011c30" stroke-width="0.8"/>
<polygon points="1538.5,960.5 1519.6,972.4 1520.6,1043.8 1526.6,1061.7" fill="#011c30" stroke="#011c30" stroke-width="0.8"/>
<polygon points="953.4,972.4 982.1,966.4 1004.0,1025.0 953.4,1043.8" fill="#0a8aa0" stroke="#0a8aa0" stroke-width="0.8"/>
<polygon points="1519.6,972.4 1490.9,966.4 1469.0,1025.0 1519.6,1043.8" fill="#0a8aa0" stroke="#0a8aa0" stroke-width="0.8"/>
<polygon points="982.1,966.4 988.1,911.9 1015.9,877.2 1027.8,897.0 1049.6,958.5 1004.0,1025.0" fill="#010e1c" stroke="#010e1c" stroke-width="0.8"/>
<polygon points="1490.9,966.4 1484.9,911.9 1457.1,877.2 1445.2,897.0 1423.4,958.5 1469.0,1025.0" fill="#010e1c" stroke="#010e1c" stroke-width="0.8"/>
<polygon points="1010.9,996.2 1017.8,962.5 1048.6,959.5 1036.7,999.2" fill="#334a3e" stroke="#334a3e" stroke-width="0.8"/>
<polygon points="1462.1,996.2 1455.2,962.5 1424.4,959.5 1436.3,999.2" fill="#334a3e" stroke="#334a3e" stroke-width="0.8"/>
<polygon points="1036.7,999.2 1049.6,958.5 1101.2,1010.1 1043.6,1014.0" fill="#01272c" stroke="#01272c" stroke-width="0.8"/>
<polygon points="1436.3,999.2 1423.4,958.5 1371.8,1010.1 1429.4,1014.0" fill="#01272c" stroke="#01272c" stroke-width="0.8"/>
<polygon points="1029.8,779.0 1085.3,779.0 1085.3,799.8 1045.6,821.7 1015.9,877.2" fill="#0aa0b8" stroke="#0aa0b8" stroke-width="0.8"/>
<polygon points="1443.2,779.0 1387.7,779.0 1387.7,799.8 1427.4,821.7 1457.1,877.2" fill="#0aa0b8" stroke="#0aa0b8" stroke-width="0.8"/>
<polygon points="1014.9,875.2 1037.7,851.4 1085.3,885.1 1059.5,891.1 1023.8,897.0" fill="#0a90c8" stroke="#0a90c8" stroke-width="0.8"/>
<polygon points="1458.1,875.2 1435.3,851.4 1387.7,885.1 1413.5,891.1 1449.2,897.0" fill="#0a90c8" stroke="#0a90c8" stroke-width="0.8"/>
<polygon points="1045.6,821.7 1077.4,844.5 1085.3,885.1 1037.7,851.4" fill="#021a38" stroke="#021a38" stroke-width="0.8"/>
<polygon points="1427.4,821.7 1395.6,844.5 1387.7,885.1 1435.3,851.4" fill="#021a38" stroke="#021a38" stroke-width="0.8"/>
<polygon points="1077.4,843.5 1085.3,799.8 1095.2,829.6 1089.3,887.1" fill="#01262e" stroke="#01262e" stroke-width="0.8"/>
<polygon points="1395.6,843.5 1387.7,799.8 1377.8,829.6 1383.7,887.1" fill="#01262e" stroke="#01262e" stroke-width="0.8"/>
<polygon points="1095.2,829.6 1150.7,779.0 1154.7,811.7 1115.0,905.0" fill="#05a8e0" stroke="#05a8e0" stroke-width="0.8"/>
<polygon points="1377.8,829.6 1322.3,779.0 1318.3,811.7 1358.0,905.0" fill="#05a8e0" stroke="#05a8e0" stroke-width="0.8"/>
<polygon points="1095.2,829.6 1125.0,797.9 1109.1,871.2" fill="#0a90c0" stroke="#0a90c0" stroke-width="0.8"/>
<polygon points="1377.8,829.6 1348.0,797.9 1363.9,871.2" fill="#0a90c0" stroke="#0a90c0" stroke-width="0.8"/>
<polygon points="1115.0,905.0 1154.7,811.7 1148.8,891.1" fill="#0aa0b8" stroke="#0aa0b8" stroke-width="0.8"/>
<polygon points="1358.0,905.0 1318.3,811.7 1324.2,891.1" fill="#0aa0b8" stroke="#0aa0b8" stroke-width="0.8"/>
<polygon points="1148.8,891.1 1154.7,811.7 1170.6,807.8 1176.5,843.5" fill="#01080f" stroke="#01080f" stroke-width="0.8"/>
<polygon points="1324.2,891.1 1318.3,811.7 1302.4,807.8 1296.5,843.5" fill="#01080f" stroke="#01080f" stroke-width="0.8"/>
<polygon points="1166.6,807.8 1241.0,797.9 1241.0,847.4 1176.5,843.5" fill="#233a2e" stroke="#233a2e" stroke-width="0.8"/>
<polygon points="1306.4,807.8 1232.0,797.9 1232.0,847.4 1296.5,843.5" fill="#233a2e" stroke="#233a2e" stroke-width="0.8"/>
<polygon points="1117.0,906.9 1176.5,843.5 1241.0,847.4 1241.0,924.8 1146.8,940.7" fill="#344f3e" stroke="#344f3e" stroke-width="0.8"/>
<polygon points="1356.0,906.9 1296.5,843.5 1232.0,847.4 1232.0,924.8 1326.2,940.7" fill="#344f3e" stroke="#344f3e" stroke-width="0.8"/>
<polygon points="1130.9,944.6 1241.0,924.8 1241.0,1061.7 1107.1,1061.7 1154.7,980.3" fill="#3c6a60" stroke="#3c6a60" stroke-width="0.8"/>
<polygon points="1342.1,944.6 1232.0,924.8 1232.0,1061.7 1365.9,1061.7 1318.3,980.3" fill="#3c6a60" stroke="#3c6a60" stroke-width="0.8"/>
<polygon points="1130.9,944.6 1154.7,980.3 1103.1,1037.8" fill="#1f2a1c" stroke="#1f2a1c" stroke-width="0.8"/>
<polygon points="1342.1,944.6 1318.3,980.3 1369.9,1037.8" fill="#1f2a1c" stroke="#1f2a1c" stroke-width="0.8"/>
<polygon points="1119.0,906.9 1158.7,924.8 1146.8,940.7 1130.9,944.6" fill="#0a9ad0" stroke="#0a9ad0" stroke-width="0.8"/>
<polygon points="1354.0,906.9 1314.3,924.8 1326.2,940.7 1342.1,944.6" fill="#0a9ad0" stroke="#0a9ad0" stroke-width="0.8"/>
<polygon points="1021.8,897.0 1057.5,889.1 1087.3,887.1 1117.0,906.9 1119.0,936.7 1101.2,946.6 1075.4,946.6 1053.6,932.7 1045.6,916.9" fill="#010a14" stroke="#010a14" stroke-width="0.8"/>
<polygon points="1451.2,897.0 1415.5,889.1 1385.7,887.1 1356.0,906.9 1354.0,936.7 1371.8,946.6 1397.6,946.6 1419.4,932.7 1427.4,916.9" fill="#010a14" stroke="#010a14" stroke-width="0.8"/>
<polygon points="1056.5,912.9 1069.4,899.0 1097.2,901.0 1113.1,912.9 1115.0,934.7 1097.2,943.6 1077.4,944.6 1061.5,930.7" fill="#0a6060" stroke="#0a6060" stroke-width="0.8"/>
<polygon points="1416.5,912.9 1403.6,899.0 1375.8,901.0 1359.9,912.9 1358.0,934.7 1375.8,943.6 1395.6,944.6 1411.5,930.7" fill="#0a6060" stroke="#0a6060" stroke-width="0.8"/>
<polygon points="1066.4,900.0 1077.4,908.9 1095.2,910.9 1085.3,916.9" fill="#10b0e0" stroke="#10b0e0" stroke-width="0.8"/>
<polygon points="1406.6,900.0 1395.6,908.9 1377.8,910.9 1387.7,916.9" fill="#10b0e0" stroke="#10b0e0" stroke-width="0.8"/>
<polygon points="1022.8,925.8 1039.7,910.9 1053.6,932.7 1075.4,946.6 1067.4,956.5 1047.6,958.5" fill="#05a8e0" stroke="#05a8e0" stroke-width="0.8"/>
<polygon points="1450.2,925.8 1433.3,910.9 1419.4,932.7 1397.6,946.6 1405.6,956.5 1425.4,958.5" fill="#05a8e0" stroke="#05a8e0" stroke-width="0.8"/>
<polygon points="1047.6,958.5 1075.4,946.6 1101.2,946.6 1128.9,942.6 1107.1,962.5 1095.2,966.4 1069.4,959.5" fill="#04426a" stroke="#04426a" stroke-width="0.8"/>
<polygon points="1425.4,958.5 1397.6,946.6 1371.8,946.6 1344.1,942.6 1365.9,962.5 1377.8,966.4 1403.6,959.5" fill="#04426a" stroke="#04426a" stroke-width="0.8"/>
<polygon points="1095.2,966.4 1107.1,962.5 1130.9,944.6 1130.9,982.3 1103.1,1037.8" fill="#023a58" stroke="#023a58" stroke-width="0.8"/>
<polygon points="1377.8,966.4 1365.9,962.5 1342.1,944.6 1342.1,982.3 1369.9,1037.8" fill="#023a58" stroke="#023a58" stroke-width="0.8"/>
<polygon points="1101.2,1010.1 1069.4,959.5 1095.2,966.4 1103.1,1037.8" fill="#0a8ac0" stroke="#0a8ac0" stroke-width="0.8"/>
<polygon points="1371.8,1010.1 1403.6,959.5 1377.8,966.4 1369.9,1037.8" fill="#0a8ac0" stroke="#0a8ac0" stroke-width="0.8"/>
<polygon points="1093.2,968.4 1105.1,963.5 1101.2,1008.1" fill="#10b0e0" stroke="#10b0e0" stroke-width="0.8"/>
<polygon points="1379.8,968.4 1367.9,963.5 1371.8,1008.1" fill="#10b0e0" stroke="#10b0e0" stroke-width="0.8"/>
<polygon points="1004.0,1025.0 1043.6,1014.0 1101.2,1010.1 1103.1,1037.8 1007.9,1061.7" fill="#1f4a4e" stroke="#1f4a4e" stroke-width="0.8"/>
<polygon points="1469.0,1025.0 1429.4,1014.0 1371.8,1010.1 1369.9,1037.8 1465.1,1061.7" fill="#1f4a4e" stroke="#1f4a4e" stroke-width="0.8"/>
<polygon points="1007.9,1025.9 1101.2,1037.8 1007.9,1047.8" fill="#2a5f5a" stroke="#2a5f5a" stroke-width="0.8"/>
<polygon points="1465.1,1025.9 1371.8,1037.8 1465.1,1047.8" fill="#2a5f5a" stroke="#2a5f5a" stroke-width="0.8"/>
<polygon points="953.4,1043.8 1004.0,1025.0 1007.9,1061.7 950.4,1061.7" fill="#0aa8dc" stroke="#0aa8dc" stroke-width="0.8"/>
<polygon points="1519.6,1043.8 1469.0,1025.0 1465.1,1061.7 1522.6,1061.7" fill="#0aa8dc" stroke="#0aa8dc" stroke-width="0.8"/>
<polygon points="1166.7,818.8 1236.4,818.8 1236.4,843.8 1176.2,843.8" fill="#1f2a1f" stroke="#1f2a1f" stroke-width="0.8"/>
<polygon points="1306.3,818.8 1236.6,818.8 1236.6,843.8 1296.8,843.8" fill="#1f2a1f" stroke="#1f2a1f" stroke-width="0.8"/>
<polygon points="1142.9,891.4 1176.2,843.8 1236.4,843.8 1236.4,847.4" fill="#2b3120" stroke="#2b3120" stroke-width="0.8"/>
<polygon points="1330.1,891.4 1296.8,843.8 1236.6,843.8 1236.6,847.4" fill="#2b3120" stroke="#2b3120" stroke-width="0.8"/>
<polygon points="1117.9,905.7 1142.9,891.4 1236.4,847.4 1236.4,924.8 1160.7,924.8" fill="#35553f" stroke="#35553f" stroke-width="0.8"/>
<polygon points="1355.1,905.7 1330.1,891.4 1236.6,847.4 1236.6,924.8 1312.3,924.8" fill="#35553f" stroke="#35553f" stroke-width="0.8"/>
<polygon points="1160.7,924.8 1236.4,847.4 1236.4,924.8" fill="#375a45" stroke="#375a45" stroke-width="0.8"/>
<polygon points="1312.3,924.8 1236.6,847.4 1236.6,924.8" fill="#375a45" stroke="#375a45" stroke-width="0.8"/>
<polygon points="1132.1,943.8 1236.4,924.8 1156.0,980.7" fill="#3e6c60" stroke="#3e6c60" stroke-width="0.8"/>
<polygon points="1340.9,943.8 1236.6,924.8 1317.0,980.7" fill="#3e6c60" stroke="#3e6c60" stroke-width="0.8"/>
<polygon points="1132.1,943.8 1156.0,980.7 1106.0,1040.2" fill="#1f2a1c" stroke="#1f2a1c" stroke-width="0.8"/>
<polygon points="1340.9,943.8 1317.0,980.7 1367.0,1040.2" fill="#1f2a1c" stroke="#1f2a1c" stroke-width="0.8"/>
<polygon points="1236.4,924.8 1236.4,1165.2 1156.0,980.7" fill="#376a62" stroke="#376a62" stroke-width="0.8"/>
<polygon points="1236.6,924.8 1236.6,1165.2 1317.0,980.7" fill="#376a62" stroke="#376a62" stroke-width="0.8"/>
<polygon points="1156.0,980.7 1236.4,1165.2 1106.0,1040.2" fill="#3f7068" stroke="#3f7068" stroke-width="0.8"/>
<polygon points="1317.0,980.7 1236.6,1165.2 1367.0,1040.2" fill="#3f7068" stroke="#3f7068" stroke-width="0.8"/>
<polygon points="1044.0,1145.0 1106.0,1040.2 1236.4,1165.2" fill="#3f5e4c" stroke="#3f5e4c" stroke-width="0.8"/>
<polygon points="1429.0,1145.0 1367.0,1040.2 1236.6,1165.2" fill="#3f5e4c" stroke="#3f5e4c" stroke-width="0.8"/>
<polygon points="1116.7,1117.6 1146.4,1112.9 1128.6,1130.7" fill="#051a18" stroke="#051a18" stroke-width="0.8"/>
<polygon points="1356.3,1117.6 1326.6,1112.9 1344.4,1130.7" fill="#051a18" stroke="#051a18" stroke-width="0.8"/>
<polygon points="980.0,1143.1 1042.6,1145.3 1030.2,1185.3 1028.0,1213.0 980.0,1201.3" fill="#0a8ab8" stroke="#0a8ab8" stroke-width="0.8"/>
<polygon points="1493.0,1143.1 1430.4,1145.3 1442.8,1185.3 1445.0,1213.0 1493.0,1201.3" fill="#0a8ab8" stroke="#0a8ab8" stroke-width="0.8"/>
<polygon points="1042.6,1145.3 1073.1,1146.0 1030.2,1185.3" fill="#2f6a68" stroke="#2f6a68" stroke-width="0.8"/>
<polygon points="1430.4,1145.3 1399.9,1146.0 1442.8,1185.3" fill="#2f6a68" stroke="#2f6a68" stroke-width="0.8"/>
<polygon points="1073.1,1146.0 1092.1,1156.9 1030.2,1185.3" fill="#003f58" stroke="#003f58" stroke-width="0.8"/>
<polygon points="1399.9,1146.0 1380.9,1156.9 1442.8,1185.3" fill="#003f58" stroke="#003f58" stroke-width="0.8"/>
<polygon points="1073.1,1146.0 1183.8,1148.2 1144.5,1156.2 1136.5,1180.9 1092.1,1156.9" fill="#228f94" stroke="#228f94" stroke-width="0.8"/>
<polygon points="1399.9,1146.0 1289.2,1148.2 1328.5,1156.2 1336.5,1180.9 1380.9,1156.9" fill="#228f94" stroke="#228f94" stroke-width="0.8"/>
<polygon points="1030.2,1185.3 1092.1,1156.9 1136.5,1180.9 1167.0,1212.2" fill="#35807e" stroke="#35807e" stroke-width="0.8"/>
<polygon points="1442.8,1185.3 1380.9,1156.9 1336.5,1180.9 1306.0,1212.2" fill="#35807e" stroke="#35807e" stroke-width="0.8"/>
<polygon points="1144.5,1156.2 1183.8,1148.2 1163.4,1186.8" fill="#2c8a85" stroke="#2c8a85" stroke-width="0.8"/>
<polygon points="1328.5,1156.2 1289.2,1148.2 1309.6,1186.8" fill="#2c8a85" stroke="#2c8a85" stroke-width="0.8"/>
<polygon points="1136.5,1180.9 1144.5,1156.2 1163.4,1186.8 1169.2,1195.5 1167.0,1212.2" fill="#01202f" stroke="#01202f" stroke-width="0.8"/>
<polygon points="1336.5,1180.9 1328.5,1156.2 1309.6,1186.8 1303.8,1195.5 1306.0,1212.2" fill="#01202f" stroke="#01202f" stroke-width="0.8"/>
<polygon points="1028.0,1213.0 1030.2,1185.3 1167.0,1212.2" fill="#003e60" stroke="#003e60" stroke-width="0.8"/>
<polygon points="1445.0,1213.0 1442.8,1185.3 1306.0,1212.2" fill="#003e60" stroke="#003e60" stroke-width="0.8"/>
<polygon points="1163.4,1186.8 1183.8,1148.2 1236.4,1166.4 1236.4,1192.6 1218.7,1192.6 1202.7,1208.6 1189.6,1198.4 1170.7,1195.5" fill="#0a90c0" stroke="#0a90c0" stroke-width="0.8"/>
<polygon points="1309.6,1186.8 1289.2,1148.2 1236.6,1166.4 1236.6,1192.6 1254.3,1192.6 1270.3,1208.6 1283.4,1198.4 1302.3,1195.5" fill="#0a90c0" stroke="#0a90c0" stroke-width="0.8"/>
<polygon points="1167.0,1212.2 1169.2,1195.5 1189.6,1197.7 1202.7,1210.0 1217.2,1231.9 1216.5,1258.1 1202.7,1239.2" fill="#001a30" stroke="#001a30" stroke-width="0.8"/>
<polygon points="1306.0,1212.2 1303.8,1195.5 1283.4,1197.7 1270.3,1210.0 1255.8,1231.9 1256.5,1258.1 1270.3,1239.2" fill="#001a30" stroke="#001a30" stroke-width="0.8"/>
<polygon points="1189.6,1197.7 1202.7,1210.0 1204.1,1239.2" fill="#000000" stroke="#000000" stroke-width="0.8"/>
<polygon points="1283.4,1197.7 1270.3,1210.0 1268.9,1239.2" fill="#000000" stroke="#000000" stroke-width="0.8"/>
<polygon points="1202.8,1209.5 1218.5,1192.9 1216.9,1230.1" fill="#2a7890" stroke="#2a7890" stroke-width="0.8"/>
<polygon points="1270.2,1209.5 1254.5,1192.9 1256.1,1230.1" fill="#2a7890" stroke="#2a7890" stroke-width="0.8"/>
<polygon points="1216.5,1192.6 1236.4,1192.6 1236.4,1261.7 1216.5,1258.1" fill="#2f4540" stroke="#2f4540" stroke-width="0.8"/>
<polygon points="1256.5,1192.6 1236.6,1192.6 1236.6,1261.7 1256.5,1258.1" fill="#2f4540" stroke="#2f4540" stroke-width="0.8"/>
<polygon points="1218.5,1192.9 1236.4,1192.9 1236.4,1261.4" fill="#305868" stroke="#305868" stroke-width="0.8"/>
<polygon points="1254.5,1192.9 1236.6,1192.9 1236.6,1261.4" fill="#305868" stroke="#305868" stroke-width="0.8"/>
<polygon points="1028.0,1213.0 1167.0,1212.2 1204.1,1240.6 1236.4,1287.2 1211.4,1279.2 1170.7,1286.5 1067.3,1268.3 1041.1,1245.0" fill="#00a3e4" stroke="#00a3e4" stroke-width="0.8"/>
<polygon points="1445.0,1213.0 1306.0,1212.2 1268.9,1240.6 1236.6,1287.2 1261.6,1279.2 1302.3,1286.5 1405.7,1268.3 1431.9,1245.0" fill="#00a3e4" stroke="#00a3e4" stroke-width="0.8"/>
<polygon points="979.3,1182.4 1028.0,1213.0 1041.1,1245.0 979.3,1220.2" fill="#000c18" stroke="#000c18" stroke-width="0.8"/>
<polygon points="1493.7,1182.4 1445.0,1213.0 1431.9,1245.0 1493.7,1220.2" fill="#000c18" stroke="#000c18" stroke-width="0.8"/>
<polygon points="1028.0,1213.0 1185.2,1269.7 1041.1,1245.0" fill="#01334a" stroke="#01334a" stroke-width="0.8"/>
<polygon points="1445.0,1213.0 1287.8,1269.7 1431.9,1245.0" fill="#01334a" stroke="#01334a" stroke-width="0.8"/>
<polygon points="979.3,1220.2 1041.1,1245.0 979.3,1238.4" fill="#0880c0" stroke="#0880c0" stroke-width="0.8"/>
<polygon points="1493.7,1220.2 1431.9,1245.0 1493.7,1238.4" fill="#0880c0" stroke="#0880c0" stroke-width="0.8"/>
<polygon points="1060.0,1269.7 1170.7,1286.5 1073.1,1293.0" fill="#0a8cc8" stroke="#0a8cc8" stroke-width="0.8"/>
<polygon points="1413.0,1269.7 1302.3,1286.5 1399.9,1293.0" fill="#0a8cc8" stroke="#0a8cc8" stroke-width="0.8"/>
<polygon points="1073.1,1293.0 1170.7,1286.5 1211.4,1279.2 1236.4,1287.2 1198.3,1313.4 1161.9,1335.9" fill="#0078a8" stroke="#0078a8" stroke-width="0.8"/>
<polygon points="1399.9,1293.0 1302.3,1286.5 1261.6,1279.2 1236.6,1287.2 1274.7,1313.4 1311.1,1335.9" fill="#0078a8" stroke="#0078a8" stroke-width="0.8"/>
<polygon points="1198.3,1313.4 1236.4,1287.2 1236.4,1300.3" fill="#005a80" stroke="#005a80" stroke-width="0.8"/>
<polygon points="1274.7,1313.4 1236.6,1287.2 1236.6,1300.3" fill="#005a80" stroke="#005a80" stroke-width="0.8"/>
<polygon points="1161.9,1335.9 1198.3,1313.4 1236.4,1300.3 1236.4,1326.5" fill="#011a2e" stroke="#011a2e" stroke-width="0.8"/>
<polygon points="1311.1,1335.9 1274.7,1313.4 1236.6,1300.3 1236.6,1326.5" fill="#011a2e" stroke="#011a2e" stroke-width="0.8"/>
<polygon points="1073.1,1293.0 1161.9,1335.9 1028.0,1351.2" fill="#000e1a" stroke="#000e1a" stroke-width="0.8"/>
<polygon points="1399.9,1293.0 1311.1,1335.9 1445.0,1351.2" fill="#000e1a" stroke="#000e1a" stroke-width="0.8"/>
<polygon points="1217.2,1258.1 1236.4,1261.7 1236.4,1287.2" fill="#000a14" stroke="#000a14" stroke-width="0.8"/>
<polygon points="1255.8,1258.1 1236.6,1261.7 1236.6,1287.2" fill="#000a14" stroke="#000a14" stroke-width="0.8"/>
<polygon points="1097.1,1365.5 1163.8,1336.3 1194.8,1389.3 1171.0,1384.5 1147.1,1379.2 1110.2,1376.8 1079.3,1379.8" fill="#0078b4" stroke="#0078b4" stroke-width="0.8"/>
<polygon points="1375.9,1365.5 1309.2,1336.3 1278.2,1389.3 1302.0,1384.5 1325.9,1379.2 1362.8,1376.8 1393.7,1379.8" fill="#0078b4" stroke="#0078b4" stroke-width="0.8"/>
<polygon points="1163.8,1336.3 1236.4,1327.4 1194.8,1389.3" fill="#003855" stroke="#003855" stroke-width="0.8"/>
<polygon points="1309.2,1336.3 1236.6,1327.4 1278.2,1389.3" fill="#003855" stroke="#003855" stroke-width="0.8"/>
<polygon points="1194.8,1389.3 1236.4,1327.4 1236.4,1447.0" fill="#00a4e4" stroke="#00a4e4" stroke-width="0.8"/>
<polygon points="1278.2,1389.3 1236.6,1327.4 1236.6,1447.0" fill="#00a4e4" stroke="#00a4e4" stroke-width="0.8"/>
<polygon points="1079.3,1379.8 1110.2,1376.8 1086.4,1394.6 1106.1,1390.5 1086.4,1412.5 1106.7,1406.5 1098.3,1439.9 1116.2,1431.0 1112.6,1466.7 1130.5,1440.5 1136.4,1471.4 1154.3,1426.2 1155.5,1456.0 1178.1,1432.1 1172.1,1466.7 1184.0,1444.0 1180.5,1466.1 1193.6,1442.9 1188.8,1468.5 1211.4,1440.5 1221.0,1465.5 1222.1,1429.8 1236.4,1475.0 1236.4,1447.0 1194.8,1389.3" fill="#00a0e0" stroke="#00a0e0" stroke-width="0.8"/>
<polygon points="1393.7,1379.8 1362.8,1376.8 1386.6,1394.6 1366.9,1390.5 1386.6,1412.5 1366.3,1406.5 1374.7,1439.9 1356.8,1431.0 1360.4,1466.7 1342.5,1440.5 1336.6,1471.4 1318.7,1426.2 1317.5,1456.0 1294.9,1432.1 1300.9,1466.7 1289.0,1444.0 1292.5,1466.1 1279.4,1442.9 1284.2,1468.5 1261.6,1440.5 1252.0,1465.5 1250.9,1429.8 1236.6,1475.0 1236.6,1447.0 1278.2,1389.3" fill="#00a0e0" stroke="#00a0e0" stroke-width="0.8"/>
<polygon points="1086.4,1412.5 1171.0,1384.5 1194.8,1390.5 1106.7,1406.5" fill="#0080c0" stroke="#0080c0" stroke-width="0.8"/>
<polygon points="1386.6,1412.5 1302.0,1384.5 1278.2,1390.5 1366.3,1406.5" fill="#0080c0" stroke="#0080c0" stroke-width="0.8"/>
<polygon points="1079.3,1379.8 1110.2,1376.8 1147.1,1379.2 1086.4,1394.6" fill="#0078b0" stroke="#0078b0" stroke-width="0.8"/>
<polygon points="1393.7,1379.8 1362.8,1376.8 1325.9,1379.2 1386.6,1394.6" fill="#0078b0" stroke="#0078b0" stroke-width="0.8"/>
<polygon points="1112.6,1466.7 1143.6,1417.3 1116.2,1431.0" fill="#006a98" stroke="#006a98" stroke-width="0.8"/>
<polygon points="1360.4,1466.7 1329.4,1417.3 1356.8,1431.0" fill="#006a98" stroke="#006a98" stroke-width="0.8"/>
<polygon points="1188.8,1468.5 1200.7,1410.7 1211.4,1440.5" fill="#0878a8" stroke="#0878a8" stroke-width="0.8"/>
<polygon points="1284.2,1468.5 1272.3,1410.7 1261.6,1440.5" fill="#0878a8" stroke="#0878a8" stroke-width="0.8"/>
<polygon points="1221.0,1465.5 1222.1,1429.8 1236.4,1447.0 1236.4,1475.0" fill="#006f98" stroke="#006f98" stroke-width="0.8"/>
<polygon points="1252.0,1465.5 1250.9,1429.8 1236.6,1447.0 1236.6,1475.0" fill="#006f98" stroke="#006f98" stroke-width="0.8"/>
<polygon points="987.8,912.8 1035.9,910.5 1023.0,924.8 1000.0,929.0" fill="#182b26" stroke="#182b26" stroke-width="0.8"/>
<polygon points="1485.2,912.8 1437.1,910.5 1450.0,924.8 1473.0,929.0" fill="#182b26" stroke="#182b26" stroke-width="0.8"/>
<polygon points="1000.0,929.0 1023.0,924.8 1048.0,956.3" fill="#22352a" stroke="#22352a" stroke-width="0.8"/>
<polygon points="1473.0,929.0 1450.0,924.8 1425.0,956.3" fill="#22352a" stroke="#22352a" stroke-width="0.8"/>
<polygon points="987.8,912.5 1014.6,878.5 1020.0,897.0 1035.9,910.5" fill="#011a30" stroke="#011a30" stroke-width="0.8"/>
<polygon points="1485.2,912.5 1458.4,878.5 1453.0,897.0 1437.1,910.5" fill="#011a30" stroke="#011a30" stroke-width="0.8"/>
<polygon points="1038.7,911.9 1053.5,919.3 1071.1,941.5 1085.0,946.6 1064.6,951.7 1045.2,931.3" fill="#005a92" stroke="#005a92" stroke-width="0.8"/>
<polygon points="1434.3,911.9 1419.5,919.3 1401.9,941.5 1388.0,946.6 1408.4,951.7 1427.8,931.3" fill="#005a92" stroke="#005a92" stroke-width="0.8"/>
<polygon points="1078.0,924.0 1092.0,917.0 1102.0,928.0 1096.0,942.0 1082.0,942.0" fill="#0a7272" stroke="#0a7272" stroke-width="0.8"/>
<polygon points="1395.0,924.0 1381.0,917.0 1371.0,928.0 1377.0,942.0 1391.0,942.0" fill="#0a7272" stroke="#0a7272" stroke-width="0.8"/>
</g></svg>
<div class="r" style="left:1750px;top:207px;width:643px;height:856px;border-radius:5px;background:#ececec;box-shadow:0 0 0 0.6px rgba(0,0,0,.22), 0 5px 14px rgba(0,0,0,.28);"></div>
<div class="r" style="left:1750px;top:207px;width:643px;height:21px;border-radius:5px 5px 0 0;background:linear-gradient(#e8e8e8,#d3d3d3);border-bottom:1px solid #c2c2c2;"></div>
<div class="r" style="left:1757.8px;top:211.2px;width:14px;height:14px;border-radius:50%;background:#fc615d;box-shadow:inset 0 0 0 0.6px #de4a45;"></div>
<div class="r" style="left:1780.7px;top:211.2px;width:14px;height:14px;border-radius:50%;background:#d6d6d6;box-shadow:inset 0 0 0 0.6px #c8c8c8;"></div>
<div class="r" style="left:1804px;top:211.2px;width:14px;height:14px;border-radius:50%;background:#34c84a;box-shadow:inset 0 0 0 0.6px #27aa37;"></div>
<div class="t" style="left:2071.00px;transform:translateX(-50%);top:209.60px;font-size:15px;color:#4d4d4d;font-weight:normal;">Aperçu de la sortie</div>
<div class="t" style="left:1783.60px;top:245.00px;font-size:15px;color:#262626;font-weight:normal;">Simuler</div>
<div class="r" style="left:1769.5px;top:261px;width:603.5px;height:152.5px;background:#e3e3e3;border-radius:5px;box-shadow:0 0 0 0.6px #d8d8d8;"></div>
<div class="t" style="left:1783.60px;top:275.00px;font-size:15px;color:#262626;font-weight:normal;">Profil de simulation :</div>
<div class="r" style="left:1940.4px;top:271.4px;width:310.5999999999999px;height:21.0px;border-radius:4px;background:#fff;box-shadow:0 0 0 0.6px #c4c4c4, 0 0.8px 1.2px rgba(0,0,0,.18);"></div>
<div class="r" style="left:2233px;top:271.4px;width:18px;height:21.0px;border-radius:0 4px 4px 0;background:linear-gradient(#5f9cf8,#2f6fe8);"></div>
<svg class="r" style="left:2237px;top:273.9px" width="10" height="16" viewBox="0 0 10 16"><path d="M2 6 L5 3 L8 6 M2 10 L5 13 L8 10" fill="none" stroke="#fff" stroke-width="1.5" stroke-linecap="round" stroke-linejoin="round"/></svg>
<div class="t" style="left:1950.00px;top:273.70px;font-size:15px;color:#262626;font-weight:normal;">Coated FOGRA39 (ISO 12647-2:2004)</div>
<div class="r" style="left:1784.8px;top:312.6px;width:15px;height:15px;border-radius:3.5px;background:linear-gradient(#5a9af7,#3f82ef);"></div><svg class="r" style="left:1784.8px;top:312.6px" width="15" height="15" viewBox="0 0 15 15"><path d="M3.4 7.8 L6.2 11 L11.6 3.6" fill="none" stroke="#fff" stroke-width="1.9" stroke-linecap="round" stroke-linejoin="round"/></svg>
<div class="t" style="left:1807.00px;top:312.40px;font-size:15px;color:#262626;font-weight:normal;">Simuler la surimpression</div>
<div class="t" style="left:1995.00px;top:312.40px;font-size:15px;color:#262626;font-weight:normal;">La page contient une surimpression :</div>
<div class="t" style="left:2261.40px;top:312.40px;font-size:15px;color:#262626;font-weight:normal;">Oui</div>
<div class="r" style="left:1784.8px;top:348.6px;width:15px;height:15px;border-radius:3.5px;background:#fff;box-shadow:0 0 0 0.6px #b8b8b8, 0 0.6px 1px rgba(0,0,0,.15);box-sizing:border-box;"></div>
<div class="t" style="left:1807.00px;top:348.50px;font-size:15px;color:#262626;font-weight:normal;">Simuler la teinte du papier</div>
<div class="r" style="left:2007.8px;top:348.6px;width:15px;height:15px;border-radius:3.5px;background:#fff;box-shadow:0 0 0 0.6px #b8b8b8, 0 0.6px 1px rgba(0,0,0,.15);box-sizing:border-box;"></div>
<div class="t" style="left:2029.60px;top:348.50px;font-size:15px;color:#262626;font-weight:normal;">Définir la couleur d'arrière-plan des pages</div>
<div class="r" style="left:2334.5px;top:343.6px;width:27.5px;height:24.5px;background:#f6f6f6;box-shadow:0 0 0 0.8px #c8c8c8;"></div>
<div class="r" style="left:2340px;top:349px;width:17px;height:14px;background:#f1ebd3;box-shadow:0 0 0 1px #7a7a7a;"></div>
<div class="r" style="left:1784.8px;top:387.3px;width:15px;height:15px;border-radius:3.5px;background:#fff;box-shadow:0 0 0 0.6px #b8b8b8, 0 0.6px 1px rgba(0,0,0,.15);box-sizing:border-box;"></div>
<div class="t" style="left:1807.00px;top:386.80px;font-size:15px;color:#262626;font-weight:normal;">Simuler l'encre noire</div>
<div class="r" style="left:1972.9px;top:383px;width:178.0999999999999px;height:21.100000000000023px;border-radius:4px;background:#fff;box-shadow:0 0 0 0.6px #c4c4c4, 0 0.8px 1.2px rgba(0,0,0,.18);"></div>
<div class="t" style="left:1988.50px;top:385.10px;font-size:15px;color:#262626;font-weight:normal;">Gestionnaire d'encres</div>
<div class="t" style="left:1783.60px;top:433.70px;font-size:15px;color:#262626;font-weight:normal;">Afficher</div>
<div class="r" style="left:1769.5px;top:450px;width:603.5px;height:79.5px;background:#e3e3e3;border-radius:5px;box-shadow:0 0 0 0.6px #d8d8d8;"></div>
<div class="t" style="left:1783.60px;top:464.30px;font-size:15px;color:#262626;font-weight:normal;">Affichage :</div>
<div class="r" style="left:1877px;top:459.5px;width:319px;height:21.5px;border-radius:4px;background:#fff;box-shadow:0 0 0 0.6px #c4c4c4, 0 0.8px 1.2px rgba(0,0,0,.18);"></div>
<div class="r" style="left:2178px;top:459.5px;width:18px;height:21.5px;border-radius:0 4px 4px 0;background:linear-gradient(#5f9cf8,#2f6fe8);"></div>
<svg class="r" style="left:2182px;top:462.25px" width="10" height="16" viewBox="0 0 10 16"><path d="M2 6 L5 3 L8 6 M2 10 L5 13 L8 10" fill="none" stroke="#fff" stroke-width="1.5" stroke-linecap="round" stroke-linejoin="round"/></svg>
<div class="t" style="left:1886.70px;top:462.80px;font-size:15px;color:#262626;font-weight:normal;">Toutes</div>
<div class="t" style="left:2216.40px;top:464.30px;font-size:15px;color:#262626;font-weight:normal;">Opacité :</div>
<div class="r" style="left:2293.6px;top:460.8px;width:36.8px;height:21.6px;background:#fff;box-shadow:0 0 0 0.8px #c2c2c2;"></div>
<div class="t" style="left:2298.50px;top:464.80px;font-size:15px;color:#262626;font-weight:normal;">100</div>
<div class="t" style="left:2346.80px;top:464.30px;font-size:15px;color:#262626;font-weight:normal;">%</div>
<div class="r" style="left:1784.8px;top:503.5px;width:15px;height:15px;border-radius:3.5px;background:linear-gradient(#5a9af7,#3f82ef);"></div><svg class="r" style="left:1784.8px;top:503.5px" width="15" height="15" viewBox="0 0 15 15"><path d="M3.4 7.8 L6.2 11 L11.6 3.6" fill="none" stroke="#fff" stroke-width="1.9" stroke-linecap="round" stroke-linejoin="round"/></svg>
<div class="t" style="left:1807.00px;top:503.30px;font-size:15px;color:#262626;font-weight:normal;">Zones graphique, de rognage et de fond perdu</div>
<div class="r" style="left:2148px;top:499.5px;width:207px;height:21.0px;border-radius:4px;background:#fff;box-shadow:0 0 0 0.6px #c4c4c4, 0 0.8px 1.2px rgba(0,0,0,.18);"></div>
<div class="t" style="left:2163.20px;top:501.80px;font-size:15px;color:#262626;font-weight:normal;">Définir des zones de page</div>
<div class="t" style="left:1768.60px;top:555.00px;font-size:15px;color:#262626;font-weight:normal;">Aperçu :</div>
<div class="r" style="left:1840.4px;top:546.4px;width:537px;height:29.5px;border-radius:7px;background:#80a8ee;"></div>
<div class="r" style="left:1845px;top:550.5px;width:527px;height:21.5px;border-radius:4px;background:#fff;box-shadow:0 0 0 0.6px #c4c4c4, 0 0.8px 1.2px rgba(0,0,0,.18);"></div>
<div class="r" style="left:2354px;top:550.5px;width:18px;height:21.5px;border-radius:0 4px 4px 0;background:linear-gradient(#5f9cf8,#2f6fe8);"></div>
<svg class="r" style="left:2358px;top:553.25px" width="10" height="16" viewBox="0 0 10 16"><path d="M2 6 L5 3 L8 6 M2 10 L5 13 L8 10" fill="none" stroke="#fff" stroke-width="1.5" stroke-linecap="round" stroke-linejoin="round"/></svg>
<div class="t" style="left:1854.00px;top:553.30px;font-size:15px;color:#262626;font-weight:normal;">Séparations</div>
<div class="t" style="left:1783.60px;top:590.50px;font-size:15px;color:#262626;font-weight:normal;">Séparations</div>
<div class="r" style="left:1769.5px;top:607.3px;width:603.5px;height:425px;background:#e3e3e3;border-radius:5px;box-shadow:0 0 0 0.6px #d8d8d8;"></div>
<div class="r" style="left:1781.5px;top:615.5px;width:580.3px;height:267.3px;background:#fff;box-shadow:0 0 0 0.8px #cfcfcf;"></div>
<div class="r" style="left:1781.5px;top:645.5px;width:580.3px;height:1px;background:#dcdcdc;"></div>
<div class="r" style="left:1823.7px;top:620px;width:1px;height:21px;background:#e2e2e2;"></div>
<div class="r" style="left:1853.4px;top:620px;width:1px;height:21px;background:#e2e2e2;"></div>
<div class="r" style="left:2087.6px;top:620px;width:1px;height:21px;background:#e2e2e2;"></div>
<div class="r" style="left:2181px;top:620px;width:1px;height:21px;background:#e2e2e2;"></div>
<div class="t" style="left:1856.90px;top:622.60px;font-size:15px;color:#262626;font-weight:normal;">Nom</div>
<svg class="r" style="left:1788px;top:650.0px" width="21" height="18" viewBox="0 0 21 18"><rect x="1" y="4.5" width="16" height="12.5" fill="#f4f7fb" stroke="#8ba2c4" stroke-width="1"/><path d="M3.5 10.5 L7.5 14.5 L18.5 3" fill="none" stroke="#3e6cb4" stroke-width="2.6" stroke-linejoin="round"/></svg>
<div class="t" style="left:1882.40px;top:649.50px;font-size:15px;color:#1a1a1a;font-weight:normal;">Plaques quadri</div>
<svg class="r" style="left:1788px;top:674.4px" width="21" height="18" viewBox="0 0 21 18"><rect x="1" y="4.5" width="16" height="12.5" fill="#f4f7fb" stroke="#8ba2c4" stroke-width="1"/><path d="M3.5 10.5 L7.5 14.5 L18.5 3" fill="none" stroke="#3e6cb4" stroke-width="2.6" stroke-linejoin="round"/></svg>
<div class="r" style="left:1825.6px;top:672.4px;width:25.5px;height:21.3px;background:#74fbfd;"></div>
<div class="t" style="left:1882.40px;top:673.90px;font-size:15px;color:#1a1a1a;font-weight:normal;">Quadri Cyan</div>
<div class="t" style="left:2116.70px;top:673.90px;font-size:15px;color:#1a1a1a;font-weight:normal;">27%</div>
<svg class="r" style="left:1788px;top:698.8px" width="21" height="18" viewBox="0 0 21 18"><rect x="1" y="4.5" width="16" height="12.5" fill="#f4f7fb" stroke="#8ba2c4" stroke-width="1"/><path d="M3.5 10.5 L7.5 14.5 L18.5 3" fill="none" stroke="#3e6cb4" stroke-width="2.6" stroke-linejoin="round"/></svg>
<div class="r" style="left:1825.6px;top:696.8px;width:25.5px;height:21.3px;background:#e83bf2;"></div>
<div class="t" style="left:1882.40px;top:698.30px;font-size:15px;color:#1a1a1a;font-weight:normal;">Quadri Magenta</div>
<div class="t" style="left:2116.70px;top:698.30px;font-size:15px;color:#1a1a1a;font-weight:normal;">20%</div>
<svg class="r" style="left:1788px;top:723.2px" width="21" height="18" viewBox="0 0 21 18"><rect x="1" y="4.5" width="16" height="12.5" fill="#f4f7fb" stroke="#8ba2c4" stroke-width="1"/><path d="M3.5 10.5 L7.5 14.5 L18.5 3" fill="none" stroke="#3e6cb4" stroke-width="2.6" stroke-linejoin="round"/></svg>
<div class="r" style="left:1825.6px;top:721.2px;width:25.5px;height:21.3px;background:#fdfd55;"></div>
<div class="t" style="left:1882.40px;top:722.70px;font-size:15px;color:#1a1a1a;font-weight:normal;">Quadri Jaune</div>
<div class="t" style="left:2116.70px;top:722.70px;font-size:15px;color:#1a1a1a;font-weight:normal;">28%</div>
<svg class="r" style="left:1788px;top:747.6px" width="21" height="18" viewBox="0 0 21 18"><rect x="1" y="4.5" width="16" height="12.5" fill="#f4f7fb" stroke="#8ba2c4" stroke-width="1"/><path d="M3.5 10.5 L7.5 14.5 L18.5 3" fill="none" stroke="#3e6cb4" stroke-width="2.6" stroke-linejoin="round"/></svg>
<div class="r" style="left:1825.6px;top:745.6px;width:25.5px;height:21.3px;background:#000;"></div>
<div class="t" style="left:1882.40px;top:747.10px;font-size:15px;color:#1a1a1a;font-weight:normal;">Quadri Noir</div>
<div class="t" style="left:2116.70px;top:747.10px;font-size:15px;color:#1a1a1a;font-weight:normal;">0%</div>
<svg class="r" style="left:1788px;top:772.0px" width="21" height="18" viewBox="0 0 21 18"><rect x="1" y="4.5" width="16" height="12.5" fill="#f4f7fb" stroke="#8ba2c4" stroke-width="1"/><path d="M3.5 10.5 L7.5 14.5 L18.5 3" fill="none" stroke="#3e6cb4" stroke-width="2.6" stroke-linejoin="round"/></svg>
<div class="t" style="left:1882.40px;top:771.50px;font-size:15px;color:#1a1a1a;font-weight:normal;">Plaques en tons directs</div>
<svg class="r" style="left:1788px;top:796.4px" width="21" height="18" viewBox="0 0 21 18"><rect x="1" y="4.5" width="16" height="12.5" fill="#f4f7fb" stroke="#8ba2c4" stroke-width="1"/><path d="M3.5 10.5 L7.5 14.5 L18.5 3" fill="none" stroke="#3e6cb4" stroke-width="2.6" stroke-linejoin="round"/></svg>
<div class="r" style="left:1825.6px;top:794.4px;width:25.5px;height:21.3px;background:#4aa6e0;"></div>
<div class="t" style="left:1882.40px;top:795.90px;font-size:15px;color:#1a1a1a;font-weight:normal;">White</div>
<div class="t" style="left:2116.70px;top:795.90px;font-size:15px;color:#1a1a1a;font-weight:normal;">100%</div>
<div class="t" style="left:1882.40px;top:820.30px;font-size:15px;color:#1a1a1a;font-weight:normal;">Couverture totale de la zone</div>
<div class="t" style="left:2116.70px;top:820.30px;font-size:15px;color:#1a1a1a;font-weight:normal;">175%</div>
<div class="t" style="left:1783.60px;top:903.70px;font-size:15px;color:#262626;font-weight:normal;">Taille de l'échantillon :</div>
<div class="r" style="left:1952.2px;top:898.6px;width:405.4999999999998px;height:21.899999999999977px;border-radius:4px;background:#fff;box-shadow:0 0 0 0.6px #c4c4c4, 0 0.8px 1.2px rgba(0,0,0,.18);"></div>
<div class="r" style="left:2339.7px;top:898.6px;width:18px;height:21.899999999999977px;border-radius:0 4px 4px 0;background:linear-gradient(#5f9cf8,#2f6fe8);"></div>
<svg class="r" style="left:2343.7px;top:901.55px" width="10" height="16" viewBox="0 0 10 16"><path d="M2 6 L5 3 L8 6 M2 10 L5 13 L8 10" fill="none" stroke="#fff" stroke-width="1.5" stroke-linecap="round" stroke-linejoin="round"/></svg>
<div class="t" style="left:1961.40px;top:901.90px;font-size:15px;color:#262626;font-weight:normal;">Echantillon ponctuel</div>
<div class="r" style="left:1784.8px;top:944.3px;width:15px;height:15px;border-radius:3.5px;background:#fff;box-shadow:0 0 0 0.6px #b8b8b8, 0 0.6px 1px rgba(0,0,0,.15);box-sizing:border-box;"></div>
<div class="t" style="left:1807.00px;top:943.80px;font-size:15px;color:#262626;font-weight:normal;">Couverture totale de la zone</div>
<div class="r" style="left:2018px;top:940.4px;width:28px;height:23px;background:#f3f3f3;box-shadow:0 0 0 0.8px #c8c8c8;"></div>
<div class="r" style="left:2023.5px;top:945px;width:16px;height:14px;background:#14e014;box-shadow:0 0 0 1px #7a7a7a;"></div>
<div class="r" style="left:2059.6px;top:940px;width:80px;height:20.5px;background:#ececec;border-radius:3px;box-shadow:0 0 0 0.8px #d4d4d4;"></div>
<div class="r" style="left:2120.4px;top:940px;width:0.8px;height:20.5px;background:#d6d6d6;"></div>
<div class="t" style="left:2064.00px;top:943.80px;font-size:15px;color:#b4b4b4;font-weight:normal;">280</div>
<svg class="r" style="left:2125px;top:946px" width="10" height="7" viewBox="0 0 10 7"><path d="M1.5 1.5 L5 5 L8.5 1.5" fill="none" stroke="#8a8a8a" stroke-width="1.3"/></svg>
<div class="t" style="left:2158.60px;top:943.80px;font-size:15px;color:#262626;font-weight:normal;">%</div>
<div class="t" style="left:1783.60px;top:980.60px;font-size:15px;color:#262626;font-weight:normal;">La page contient une transparence :</div>
<div class="t" style="left:2044.60px;top:980.60px;font-size:15px;color:#262626;font-weight:normal;">Non</div>
<div class="t" style="left:1783.60px;top:1011.30px;font-size:15px;color:#262626;font-weight:normal;">Espace colorimétrique de fusion de la transparence :</div>
<div class="t" style="left:2155.00px;top:1011.30px;font-size:15px;color:#262626;font-weight:normal;">Aucun</div>
<div class="t" style="left:2520.30px;top:233.16px;font-size:16.7px;color:#3d7bd4;font-weight:normal;">Aperçu de la sortie</div>
<div class="t" style="left:2520.30px;top:284.46px;font-size:16.7px;color:#4b4b4b;font-weight:normal;">Contrôle en amont</div>
<div class="t" style="left:2520.30px;top:335.76px;font-size:16.7px;color:#4b4b4b;font-weight:normal;">Modifier l'objet</div>
<div class="t" style="left:2520.30px;top:387.06px;font-size:16.7px;color:#4b4b4b;font-weight:normal;">Convertir les couleurs</div>
<div class="t" style="left:2520.30px;top:438.36px;font-size:16.7px;color:#4b4b4b;font-weight:normal;">Aperçu de l'aplatissement</div>
<div class="t" style="left:2520.30px;top:489.66px;font-size:16.7px;color:#4b4b4b;font-weight:normal;">Enregistrer au format PDF/X</div>
<div class="r" style="left:2476.7px;top:535.5px;width:347px;height:1.2px;background:#d9d9d9;"></div>
<div class="t" style="left:2520.30px;top:569.86px;font-size:16.7px;color:#4b4b4b;font-weight:normal;">Définir des zones de page</div>
<div class="t" style="left:2520.30px;top:621.06px;font-size:16.7px;color:#4b4b4b;font-weight:normal;">Ajouter des repères d'impression</div>
<div class="t" style="left:2520.30px;top:672.26px;font-size:16.7px;color:#4b4b4b;font-weight:normal;">Retoucher les filets maigres</div>
<div class="t" style="left:2520.30px;top:723.46px;font-size:16.7px;color:#4b4b4b;font-weight:normal;">Gestionnaire d'encres</div>
<div class="t" style="left:2520.30px;top:774.66px;font-size:16.7px;color:#4b4b4b;font-weight:normal;">Recouvrements prédéfinis</div>
<svg class="r" style="left:2460px;top:194px" width="420" height="720" viewBox="2460 194 420 720">
<path d="M2480 251.5 V230 H2490.5 L2496.5 236 V251.5 Z" fill="none" stroke="#2f74d0" stroke-width="2.4" stroke-linejoin="round"/><path d="M2490.5 230 V236 H2496.5" fill="none" stroke="#2f74d0" stroke-width="1.6"/><rect x="2477.6" y="233.5" width="7.5" height="5" fill="#2f74d0"/><path d="M2504.5 229 V254" stroke="#86b4ec" stroke-width="1.8"/><circle cx="2504.5" cy="240" r="2.1" fill="#fafafa" stroke="#2f74d0" stroke-width="1.3"/>
<g transform="translate(0,-4)"><rect x="2481" y="283" width="13" height="7" fill="none" stroke="#6e6e6e" stroke-width="2"/><path d="M2478 288 H2498 V298 H2478 Z" fill="#6e6e6e"/><rect x="2481" y="294" width="12" height="9" fill="#fafafa" stroke="#6e6e6e" stroke-width="1.6"/><circle cx="2497.5" cy="299" r="4.6" fill="#fafafa" stroke="#6e6e6e" stroke-width="2"/><path d="M2500.8 302.3 L2505 306.5" stroke="#6e6e6e" stroke-width="2.2"/>
<rect x="2479" y="333" width="18.5" height="11" fill="none" stroke="#6e6e6e" stroke-width="2"/><path d="M2482.5 337 H2493 M2482.5 340 H2491" stroke="#6e6e6e" stroke-width="1.2"/><rect x="2480" y="349.5" width="7" height="7" fill="none" stroke="#6e6e6e" stroke-width="2"/><path d="M2490 360 L2502 347.5 Q2504 346 2505 348 L2493 360.6 Z" fill="none" stroke="#6e6e6e" stroke-width="1.8"/>
<rect x="2479" y="388" width="24" height="18" rx="1.5" fill="#6e6e6e"/><rect x="2482" y="391" width="6" height="12" fill="#e6e6e6"/><rect x="2488" y="391" width="6" height="12" fill="#c8c8c8"/><rect x="2494" y="391" width="6" height="12" fill="#9a9a9a"/>
<path d="M2479 442 V461 H2504 V442" fill="none" stroke="#6e6e6e" stroke-width="2.4"/><path d="M2491.5 433 V446 M2486.5 441 L2491.5 446 L2496.5 441" fill="none" stroke="#6e6e6e" stroke-width="3"/><path d="M2481 450 H2502 V459 H2481 Z" fill="#c8c8c8"/><path d="M2481 454 H2502" stroke="#6e6e6e" stroke-width="1" stroke-dasharray="2 2"/>
<path d="M2479 497 V510 H2488" fill="none" stroke="#6e6e6e" stroke-width="2.2"/><path d="M2485 487 H2494 L2500 493 V498" fill="none" stroke="#6e6e6e" stroke-width="2.2"/><rect x="2477" y="491" width="9" height="6" fill="#6e6e6e"/><circle cx="2499.5" cy="508.5" r="6.6" fill="#6e6e6e"/><path d="M2496.5 505.5 L2502.5 511.5 M2502.5 505.5 L2496.5 511.5" stroke="#fff" stroke-width="1.5"/>
</g><path d="M2478.5 588 V562.5 H2489 L2495 568.5 V580" fill="none" stroke="#6e6e6e" stroke-width="2"/><path d="M2489 562.5 V568.5 H2495" fill="none" stroke="#6e6e6e" stroke-width="1.6"/><path d="M2482 588 H2496 V580 M2492 575 V591 M2488 584 H2504" fill="none" stroke="#6e6e6e" stroke-width="2"/>
<path d="M2480.5 639 V615.5 H2497 L2501 619.5 V639 Z" fill="none" stroke="#6e6e6e" stroke-width="2"/><circle cx="2491" cy="629.5" r="3" fill="none" stroke="#6e6e6e" stroke-width="1.2"/><path d="M2486 629.5 H2496 M2491 624.5 V634.5" stroke="#6e6e6e" stroke-width="1.2"/>
<path d="M2478.5 692 V667 H2492 L2498 673 V677 M2498 686 V692 H2478.5" fill="none" stroke="#6e6e6e" stroke-width="2"/><path d="M2482 689 H2487" stroke="#6e6e6e" stroke-width="1.2"/><path d="M2492 689 L2504 676 Q2506 675 2506.5 677 L2494 690 Z" fill="none" stroke="#6e6e6e" stroke-width="1.8"/>
<rect x="2489" y="715" width="4.5" height="6" rx="2" fill="#6e6e6e"/><path d="M2487 721 H2495.5 V726 Q2502 731 2502 736 Q2502 741 2498 741 H2484 Q2480 741 2480 736 Q2480 731 2487 726 Z" fill="#d7d7d7" stroke="#6e6e6e" stroke-width="2"/><path d="M2481 733 H2501 V738 Q2501 741 2498 741 H2484 Q2481 741 2481 738 Z" fill="#6e6e6e"/><path d="M2489 724 V740 M2493 724 V740" stroke="#fafafa" stroke-width="1"/>
<path d="M2481 769.5 H2495.5 V791 H2481" fill="#dedede" stroke="#6e6e6e" stroke-width="2.2"/><rect x="2478" y="776" width="14.5" height="8" rx="2" fill="#6e6e6e"/>
<path d="M2861 238 V211 H2874 L2881 218 V238 Z" fill="#f9dede" stroke="#d9494d" stroke-width="2"/><path d="M2865 230 Q2870 220 2868 216 Q2866 222 2873 227" fill="none" stroke="#d9494d" stroke-width="1.2"/><circle cx="2876" cy="235" r="6" fill="#d9494d"/><path d="M2872 235 H2880" stroke="#fff" stroke-width="2"/>
<path d="M2860 292 V270 H2872 L2876 274 V282" fill="#eef" stroke="#6a63e6" stroke-width="2.2"/><path d="M2873 276 V292 M2866 286 L2873 297 L2880 286 Z" fill="#6a63e6" stroke="#6a63e6" stroke-width="2"/><rect x="2876" y="270" width="6" height="18" fill="#6a63e6"/>
<rect x="2860.5" y="329" width="22" height="9" fill="#f2d3e5" stroke="#cc3f93" stroke-width="2"/><rect x="2860.5" y="342" width="9" height="11" fill="#f2d3e5" stroke="#cc3f93" stroke-width="2"/><path d="M2875 343 H2882 M2875 347 H2882 M2875 351 H2882" stroke="#cc3f93" stroke-width="1.5"/>
<path d="M2861 414 V387 H2874 L2881 394 V414 Z" fill="#dcebed" stroke="#3d8f9b" stroke-width="2"/><path d="M2865 406 Q2870 396 2868 392 Q2866 398 2873 403" fill="none" stroke="#3d8f9b" stroke-width="1.2"/><circle cx="2876" cy="411" r="6" fill="#3d8f9b"/><path d="M2872 411 H2880" stroke="#fff" stroke-width="2"/>
<path d="M2861 458 V471 H2870 M2861 458 H2870" fill="none" stroke="#8bc34a" stroke-width="2" stroke-dasharray="2.5 2"/><rect x="2874" y="447" width="9" height="24" fill="#e8f5d8" stroke="#8bc34a" stroke-width="2"/><path d="M2872 449 L2865 456 M2865 451 V456 H2870" fill="none" stroke="#8bc34a" stroke-width="2.2"/>
<path d="M2860 532 V505 H2873 L2880 512 V532 Z" fill="#f8f0d0" stroke="#d8b93a" stroke-width="2"/><rect x="2874" y="520" width="8" height="9" fill="#d8b93a"/>
<path d="M2861 566 H2882 V586 H2871 L2865 592 V586 H2861 Z" fill="#d8b840"/><path d="M2865 573 H2882 M2865 578 H2882" stroke="#fafafa" stroke-width="1.6"/>
<path d="M2859 650 L2869 633 L2882 622 V636 L2874 650 Z" fill="#e9dff7" stroke="#8a5ad8" stroke-width="2.2" stroke-linejoin="round"/>
<path d="M2861 693 H2882 M2861 697 H2882" stroke="#5aaa5a" stroke-width="4"/><path d="M2866 690 V683 H2876 L2882 688" fill="#d8eed8" stroke="#5aaa5a" stroke-width="1.8"/><path d="M2865 700 V710 H2882" fill="none" stroke="#5aaa5a" stroke-width="2" stroke-dasharray="2 2"/><circle cx="2860" cy="683" r="0.9" fill="#5aaa5a"/>
<path d="M2860.5 751 V767 H2882 V751" fill="#dbe6f7" stroke="#3a80e0" stroke-width="2"/><path d="M2871 759 V743 M2866 747 L2871 741 L2876 747" fill="none" stroke="#3a80e0" stroke-width="3.2"/>
<rect x="2844" y="784" width="36" height="59" fill="#b044c4"/><path d="M2864.5 827 V795 H2877 L2882 800 V827 Z" fill="none" stroke="#fff" stroke-width="2.2"/><circle cx="2874" cy="817" r="3" fill="none" stroke="#fff" stroke-width="1.2"/><path d="M2868 817 H2880 M2874 811 V823" stroke="#fff" stroke-width="1.2"/>
<path d="M2863 884 L2875 872" stroke="#6e6e6e" stroke-width="4" stroke-linecap="round"/><circle cx="2878" cy="866" r="6" fill="none" stroke="#6e6e6e" stroke-width="3"/><circle cx="2881" cy="882" r="5" fill="none" stroke="#6e6e6e" stroke-width="3"/>
</svg>
</body></html>
